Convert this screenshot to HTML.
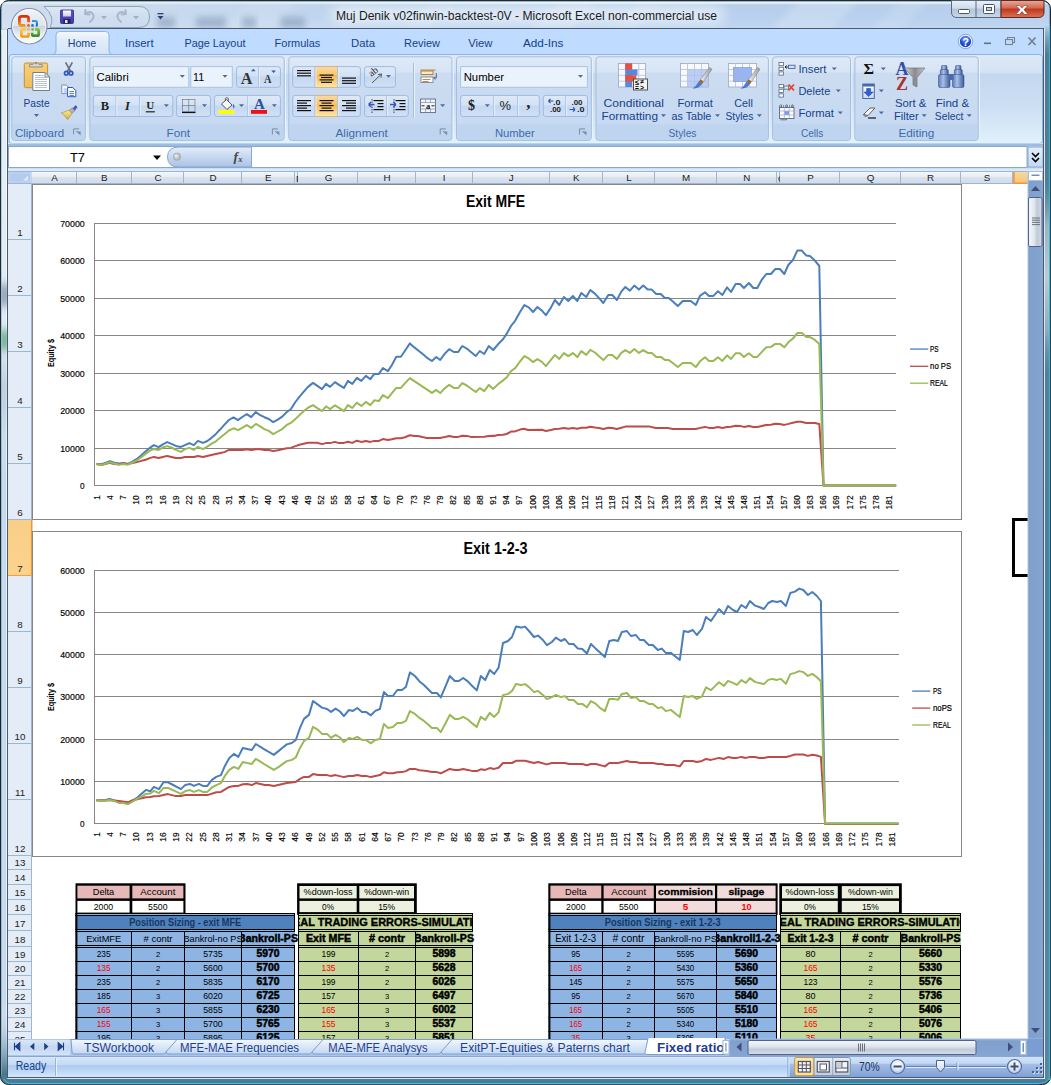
<!DOCTYPE html><html><head><meta charset="utf-8"><title>Muj Denik v02finwin-backtest-0V - Microsoft Excel non-commercial use</title><style>html,body{margin:0;padding:0;background:#fff}body{width:1051px;height:1085px;position:relative;overflow:hidden;font-family:'Liberation Sans',sans-serif}</style></head><body><svg width="1051" height="1085" viewBox="0 0 1051 1085" style="position:absolute;left:0;top:0;font-family:'Liberation Sans',sans-serif"><defs><linearGradient id="g1" x1="0" y1="0" x2="0" y2="1"><stop offset="0" stop-color="#a9c3dc"/><stop offset="0.14" stop-color="#7fa3b8"/><stop offset="0.3" stop-color="#5f8aa0"/><stop offset="0.6" stop-color="#4f7d94"/><stop offset="1" stop-color="#5f8ea6"/></linearGradient><linearGradient id="g2" x1="0" y1="0" x2="0" y2="1"><stop offset="0" stop-color="#eef4fb"/><stop offset="0.06" stop-color="#dfe9f5"/><stop offset="0.1" stop-color="#b7cfeb"/><stop offset="0.5" stop-color="#b9d1ee"/><stop offset="1" stop-color="#c6daf1"/></linearGradient><filter id="bl3" x="-20%" y="-100%" width="140%" height="300%"><feGaussianBlur stdDeviation="3"/></filter><filter id="bl6" x="-20%" y="-100%" width="140%" height="300%"><feGaussianBlur stdDeviation="6"/></filter><clipPath id="clipTB"><rect x="2" y="2" width="1047" height="26.5"/></clipPath><linearGradient id="g3" x1="0" y1="0" x2="1" y2="0"><stop offset="0" stop-color="#e3e9f0" stop-opacity="0.55"/><stop offset="0.6" stop-color="#dde6f0" stop-opacity="0.35"/><stop offset="1" stop-color="#dde6f0" stop-opacity="0"/></linearGradient><linearGradient id="g4" x1="0" y1="0" x2="1" y2="0"><stop offset="0" stop-color="#f2f7fc"/><stop offset="0.18" stop-color="#c9def3"/><stop offset="0.7" stop-color="#bdd7f0"/><stop offset="0.86" stop-color="#e6f0fa"/><stop offset="1" stop-color="#f0f5fb"/></linearGradient><linearGradient id="g5" x1="0" y1="0" x2="0" y2="1"><stop offset="0" stop-color="#ffffff" stop-opacity="0"/><stop offset="0.28" stop-color="#8fa6bd" stop-opacity="0.0"/><stop offset="0.34" stop-color="#9fb4c8" stop-opacity="0.55"/><stop offset="0.42" stop-color="#ffffff" stop-opacity="0"/><stop offset="0.93" stop-color="#ffffff" stop-opacity="0"/><stop offset="0.975" stop-color="#6f93aa" stop-opacity="0.6"/><stop offset="1" stop-color="#3f6f88" stop-opacity="1"/></linearGradient><linearGradient id="g6" x1="0" y1="0" x2="0" y2="1"><stop offset="0" stop-color="#ffffff" stop-opacity="0.55"/><stop offset="0.85" stop-color="#ffffff" stop-opacity="0.45"/><stop offset="1" stop-color="#ffffff" stop-opacity="0"/></linearGradient><clipPath id="clipLF"><rect x="1.5" y="30" width="5.5" height="1046"/></clipPath><filter id="blv" x="-200%" y="-50%" width="500%" height="200%"><feGaussianBlur stdDeviation="1.5 4"/></filter><linearGradient id="g7" x1="0" y1="0" x2="1" y2="0"><stop offset="0" stop-color="#5f8ca3"/><stop offset="0.5" stop-color="#5b889f"/><stop offset="1" stop-color="#6f9ab0"/></linearGradient><linearGradient id="g8" x1="0" y1="0" x2="0" y2="1"><stop offset="0" stop-color="#c6daf1" stop-opacity="1"/><stop offset="0.008" stop-color="#c6daf1" stop-opacity="0.5"/><stop offset="0.03" stop-color="#2f6078" stop-opacity="0.35"/><stop offset="0.15" stop-color="#2f6078" stop-opacity="0.3"/><stop offset="0.19" stop-color="#c9d6dd" stop-opacity="0.55"/><stop offset="0.24" stop-color="#cfdbe1" stop-opacity="0.8"/><stop offset="0.29" stop-color="#c9d6dd" stop-opacity="0.45"/><stop offset="0.33" stop-color="#2f6078" stop-opacity="0.25"/><stop offset="0.6" stop-color="#2a6585" stop-opacity="0.35"/><stop offset="1" stop-color="#3f6f88" stop-opacity="0.2"/></linearGradient><linearGradient id="g9" x1="0" y1="0" x2="0" y2="1"><stop offset="0" stop-color="#eef3fa" stop-opacity="0.55"/><stop offset="0.5" stop-color="#d6e2f1" stop-opacity="0.35"/><stop offset="1" stop-color="#c8d8ec" stop-opacity="0.5"/></linearGradient><linearGradient id="g10" x1="0" y1="0" x2="0" y2="1"><stop offset="0" stop-color="#5a52c9"/><stop offset="1" stop-color="#3f39a8"/></linearGradient><linearGradient id="g11" x1="0" y1="0" x2="0" y2="1"><stop offset="0" stop-color="#ffffff"/><stop offset="1" stop-color="#c9cdea"/></linearGradient><linearGradient id="g12" x1="0" y1="0" x2="0" y2="1"><stop offset="0" stop-color="#e9f0f8"/><stop offset="0.45" stop-color="#cfdcec"/><stop offset="0.5" stop-color="#b3c5da"/><stop offset="1" stop-color="#c9d8ea"/></linearGradient><linearGradient id="g13" x1="0" y1="0" x2="0" y2="1"><stop offset="0" stop-color="#e8a99b"/><stop offset="0.45" stop-color="#d3664f"/><stop offset="0.5" stop-color="#c0361c"/><stop offset="1" stop-color="#d9745a"/></linearGradient><linearGradient id="g14" x1="0" y1="0" x2="0" y2="1"><stop offset="0" stop-color="#f4f8fd"/><stop offset="0.3" stop-color="#e4eefa"/><stop offset="1" stop-color="#d3e4f8"/></linearGradient><radialGradient id="g15" cx="0.5" cy="0.3" r="0.7"><stop offset="0" stop-color="#7aa2ff"/><stop offset="0.6" stop-color="#1f4fd0"/><stop offset="1" stop-color="#123aa5"/></radialGradient><linearGradient id="g16" x1="0" y1="0" x2="0" y2="1"><stop offset="0" stop-color="#dde9f6"/><stop offset="0.2" stop-color="#d4e3f4"/><stop offset="0.22" stop-color="#c3d7ef"/><stop offset="0.6" stop-color="#cddff3"/><stop offset="0.9" stop-color="#dcecf9"/><stop offset="1" stop-color="#e3f3fd"/></linearGradient><linearGradient id="g17" x1="0" y1="0" x2="0" y2="1"><stop offset="0" stop-color="#dfeaf7"/><stop offset="0.18" stop-color="#d6e4f5"/><stop offset="0.2" stop-color="#ccdcf0"/><stop offset="0.8" stop-color="#c7daf2"/><stop offset="0.81" stop-color="#c1d6f0"/><stop offset="1" stop-color="#c3d8f2"/></linearGradient><linearGradient id="g18" x1="0" y1="0" x2="0" y2="1"><stop offset="0" stop-color="#dfe9f7"/><stop offset="0.45" stop-color="#d3e2f5"/><stop offset="0.5" stop-color="#c5d8f1"/><stop offset="1" stop-color="#d0e0f6"/></linearGradient><linearGradient id="g19" x1="0" y1="0" x2="0" y2="1"><stop offset="0" stop-color="#f7d07a"/><stop offset="1" stop-color="#efbd5c"/></linearGradient><linearGradient id="g20" x1="0" y1="0" x2="0" y2="1"><stop offset="0" stop-color="#f8f8fa"/><stop offset="1" stop-color="#c5c8d0"/></linearGradient><linearGradient id="g21" x1="0" y1="0" x2="0" y2="1"><stop offset="0" stop-color="#f9ec9a"/><stop offset="1" stop-color="#d4ad3a"/></linearGradient><linearGradient id="g22" x1="0" y1="0" x2="0" y2="1"><stop offset="0" stop-color="#fbd9a0"/><stop offset="0.4" stop-color="#fbc66f"/><stop offset="0.45" stop-color="#f9b957"/><stop offset="1" stop-color="#fde9a9"/></linearGradient><linearGradient id="g23" x1="0" y1="0" x2="0" y2="1"><stop offset="0" stop-color="#fbd9a0"/><stop offset="0.4" stop-color="#fbc66f"/><stop offset="0.45" stop-color="#f9b957"/><stop offset="1" stop-color="#fde9a9"/></linearGradient><linearGradient id="g24" x1="0" y1="0" x2="1" y2="0"><stop offset="0" stop-color="#f2f2f2"/><stop offset="1" stop-color="#9a9a9a"/></linearGradient><linearGradient id="g25" x1="0" y1="0" x2="1" y2="0"><stop offset="0" stop-color="#f2f2f2"/><stop offset="1" stop-color="#9a9a9a"/></linearGradient><linearGradient id="g26" x1="0" y1="0" x2="0" y2="1"><stop offset="0" stop-color="#ffffff"/><stop offset="1" stop-color="#c7d6f0"/></linearGradient><linearGradient id="g27" x1="0" y1="0" x2="1" y2="0"><stop offset="0" stop-color="#d8d8dc"/><stop offset="0.5" stop-color="#8a8a90"/><stop offset="1" stop-color="#c8c8cc"/></linearGradient><linearGradient id="g28" x1="0" y1="0" x2="1" y2="0"><stop offset="0" stop-color="#5a7ab8"/><stop offset="0.4" stop-color="#a8c0e8"/><stop offset="1" stop-color="#3a5a98"/></linearGradient><linearGradient id="g29" x1="0" y1="0" x2="0" y2="1"><stop offset="0" stop-color="#f2f5f9"/><stop offset="0.3" stop-color="#e4e9f1"/><stop offset="0.49" stop-color="#dfe5ee"/><stop offset="0.5" stop-color="#c9d3e2"/><stop offset="0.75" stop-color="#e9eef5"/><stop offset="1" stop-color="#ffffff"/></linearGradient><linearGradient id="g30" x1="0" y1="0" x2="0" y2="1"><stop offset="0" stop-color="#d8300f"/><stop offset="0.5" stop-color="#e8560f"/><stop offset="1" stop-color="#f59a0f"/></linearGradient><linearGradient id="g31" x1="0" y1="0" x2="0" y2="1"><stop offset="0" stop-color="#2f9be8"/><stop offset="1" stop-color="#1565d0"/></linearGradient><linearGradient id="g32" x1="0" y1="0" x2="0" y2="1"><stop offset="0" stop-color="#fdc94a"/><stop offset="1" stop-color="#f59a0f"/></linearGradient><linearGradient id="g33" x1="0" y1="0" x2="0" y2="1"><stop offset="0" stop-color="#7fc23a"/><stop offset="1" stop-color="#3f8f1f"/></linearGradient><linearGradient id="g34" x1="0" y1="0" x2="0" y2="1"><stop offset="0" stop-color="#e3edf9"/><stop offset="0.5" stop-color="#c6d8f0"/><stop offset="1" stop-color="#a9c2e6"/></linearGradient><radialGradient id="g35" cx="0.5" cy="0.5" r="0.5" fx="0.35" fy="0.35"><stop offset="0" stop-color="#f4f4f4"/><stop offset="1" stop-color="#9fa6ae"/></radialGradient><linearGradient id="g36" x1="0" y1="0" x2="0" y2="1"><stop offset="0" stop-color="#e4eefb"/><stop offset="1" stop-color="#c3d8f3"/></linearGradient><linearGradient id="g37" x1="0" y1="0" x2="0" y2="1"><stop offset="0" stop-color="#f6fafc"/><stop offset="0.45" stop-color="#e6edf6"/><stop offset="0.5" stop-color="#d9e2ef"/><stop offset="1" stop-color="#d2dbe9"/></linearGradient><linearGradient id="g38" x1="0" y1="0" x2="0" y2="1"><stop offset="0" stop-color="#f9d9a0"/><stop offset="1" stop-color="#f3c572"/></linearGradient><clipPath id="clipF"><rect x="295.5" y="170" width="2.5" height="14"/></clipPath><clipPath id="clipO"><rect x="777.5" y="170" width="2.5" height="14"/></clipPath><linearGradient id="g39" x1="0" y1="0" x2="0" y2="1"><stop offset="0" stop-color="#f9cf87"/><stop offset="1" stop-color="#fbd38e"/></linearGradient><clipPath id="clipR"><rect x="8" y="184" width="24" height="855"/></clipPath><linearGradient id="g40" x1="0" y1="0" x2="1" y2="0"><stop offset="0" stop-color="#aac3e6"/><stop offset="0.12" stop-color="#7f9fcd"/><stop offset="1" stop-color="#85a4cf"/></linearGradient><linearGradient id="g41" x1="0" y1="0" x2="1" y2="0"><stop offset="0" stop-color="#f3f5f8"/><stop offset="0.4" stop-color="#e3e8ee"/><stop offset="0.65" stop-color="#bfcad8"/><stop offset="1" stop-color="#d3dbe6"/></linearGradient><clipPath id="clipT"><rect x="32" y="870" width="996" height="169"/></clipPath><clipPath id="c42"><rect x="77.4" y="916" width="216.6" height="13"/></clipPath><clipPath id="c43"><rect x="76.4" y="932" width="54.6" height="13"/></clipPath><clipPath id="c44"><rect x="132" y="932" width="52" height="13"/></clipPath><clipPath id="c45"><rect x="185" y="932" width="56" height="13"/></clipPath><clipPath id="c46"><rect x="242" y="932" width="56.5" height="13"/></clipPath><clipPath id="c47"><rect x="299" y="916" width="173" height="13"/></clipPath><clipPath id="c48"><rect x="299" y="932" width="59" height="13"/></clipPath><clipPath id="c49"><rect x="359" y="932" width="56" height="13"/></clipPath><clipPath id="c50"><rect x="416" y="932" width="60.5" height="13"/></clipPath><clipPath id="c51"><rect x="550.4" y="916" width="225.6" height="13"/></clipPath><clipPath id="c52"><rect x="549.4" y="932" width="52.6" height="13"/></clipPath><clipPath id="c53"><rect x="603" y="932" width="51" height="13"/></clipPath><clipPath id="c54"><rect x="655" y="932" width="61" height="13"/></clipPath><clipPath id="c55"><rect x="717" y="932" width="63.5" height="13"/></clipPath><clipPath id="c56"><rect x="781" y="916" width="179" height="13"/></clipPath><clipPath id="c57"><rect x="781" y="932" width="59" height="13"/></clipPath><clipPath id="c58"><rect x="841" y="932" width="59" height="13"/></clipPath><clipPath id="c59"><rect x="901" y="932" width="63.5" height="13"/></clipPath><linearGradient id="g60" x1="0" y1="0" x2="0" y2="1"><stop offset="0" stop-color="#c9dcf5"/><stop offset="0.5" stop-color="#bcd3f0"/><stop offset="1" stop-color="#a9c5eb"/></linearGradient><linearGradient id="g61" x1="0" y1="0" x2="0" y2="1"><stop offset="0" stop-color="#dbe8f8"/><stop offset="0.5" stop-color="#c4d8f2"/><stop offset="1" stop-color="#d3e3f7"/></linearGradient><linearGradient id="g62" x1="0" y1="0" x2="0" y2="1"><stop offset="0" stop-color="#f3f8fd"/><stop offset="0.45" stop-color="#dbe8f8"/><stop offset="1" stop-color="#c3d8f3"/></linearGradient><clipPath id="clipAT"><rect x="645" y="1038" width="78" height="18"/></clipPath><linearGradient id="g63" x1="0" y1="0" x2="0" y2="1"><stop offset="0" stop-color="#a3bde3"/><stop offset="0.15" stop-color="#7f9fcd"/><stop offset="1" stop-color="#86a5d1"/></linearGradient><linearGradient id="g64" x1="0" y1="0" x2="0" y2="1"><stop offset="0" stop-color="#f5f7fa"/><stop offset="0.4" stop-color="#e2e7ee"/><stop offset="0.65" stop-color="#c0cbd9"/><stop offset="1" stop-color="#d5dde7"/></linearGradient><linearGradient id="g65" x1="0" y1="0" x2="0" y2="1"><stop offset="0" stop-color="#d9e7f9"/><stop offset="0.12" stop-color="#d3e3f8"/><stop offset="0.42" stop-color="#c3d9f6"/><stop offset="0.45" stop-color="#adc9f0"/><stop offset="0.8" stop-color="#c5dcf8"/><stop offset="1" stop-color="#d9e8fb"/></linearGradient><linearGradient id="g66" x1="0" y1="0" x2="0" y2="1"><stop offset="0" stop-color="#d3e3f8"/><stop offset="0.33" stop-color="#c5d9f4"/><stop offset="0.4" stop-color="#a3bee6"/><stop offset="1" stop-color="#7f9fd3"/></linearGradient><linearGradient id="g67" x1="0" y1="0" x2="0" y2="1"><stop offset="0" stop-color="#e8eef6"/><stop offset="0.5" stop-color="#d3dce8"/><stop offset="1" stop-color="#c3cedd"/></linearGradient><linearGradient id="g68" x1="0" y1="0" x2="0" y2="1"><stop offset="0" stop-color="#fde9b8"/><stop offset="0.5" stop-color="#fbcf73"/><stop offset="1" stop-color="#fde3a3"/></linearGradient><radialGradient id="g69" cx="0.5" cy="0.35" r="0.5"><stop offset="0" stop-color="#ffffff"/><stop offset="0.7" stop-color="#e3ecf8"/><stop offset="1" stop-color="#c3d5ee"/></radialGradient><radialGradient id="g70" cx="0.5" cy="0.35" r="0.5"><stop offset="0" stop-color="#ffffff"/><stop offset="0.7" stop-color="#e3ecf8"/><stop offset="1" stop-color="#c3d5ee"/></radialGradient><linearGradient id="g71" x1="0" y1="0" x2="0" y2="1"><stop offset="0" stop-color="#f9fbfe"/><stop offset="1" stop-color="#c9d9f0"/></linearGradient></defs><rect x="0.5" y="0.5" width="1050" height="1084" fill="#46778f" stroke="#1c2a33" stroke-width="1" rx="8" />
<path d="M1.5 34 V9 Q1.5 1.5 9 1.5 H1042 Q1049.5 1.5 1049.5 9 V34 Z" fill="url(#g2)" />
<g clip-path="url(#clipTB)">
<path d="M560 0 h40 l-30 30 h-40 z" fill="#ffffff" opacity="0.16" filter="url(#bl3)"/>
<path d="M640 0 h25 l-30 30 h-25 z" fill="#ffffff" opacity="0.12" filter="url(#bl3)"/>
<path d="M800 0 h60 l-30 30 h-60 z" fill="#ffffff" opacity="0.18" filter="url(#bl3)"/>
<path d="M900 0 h30 l-30 30 h-30 z" fill="#ffffff" opacity="0.12" filter="url(#bl3)"/>
<path d="M250 0 h50 l-30 30 h-50 z" fill="#ffffff" opacity="0.12" filter="url(#bl3)"/>
<path d="M430 0 h30 l-30 30 h-30 z" fill="#ffffff" opacity="0.1" filter="url(#bl3)"/>
<rect x="2" y="2" width="420" height="27" fill="url(#g3)" />
<rect x="157" y="17" width="18" height="11" fill="#6f86a8" opacity="0.45" filter="url(#bl3)"/>
<rect x="196" y="17" width="30" height="11" fill="#6f86a8" opacity="0.45" filter="url(#bl3)"/>
<rect x="242" y="17" width="14" height="11" fill="#6f86a8" opacity="0.45" filter="url(#bl3)"/>
<rect x="281" y="17" width="24" height="11" fill="#6f86a8" opacity="0.45" filter="url(#bl3)"/>
<rect x="330" y="6" width="395" height="18" fill="#ffffff" rx="9" opacity="0.55" filter="url(#bl6)"/>
</g>
<rect x="1.5" y="30" width="5.5" height="1046" fill="url(#g4)" />
<rect x="1.5" y="30" width="5.5" height="1046" fill="url(#g5)" />
<rect x="1.5" y="30" width="5.5" height="380" fill="url(#g6)" />
<g clip-path="url(#clipLF)">
<rect x="0" y="284" width="9" height="22" fill="#6f7f9a" opacity="0.6" filter="url(#blv)"/>
<rect x="0" y="330" width="9" height="20" fill="#3f9a6a" opacity="0.6" filter="url(#blv)"/>
</g>
<rect x="7" y="29" width="1" height="1049" fill="#4b5a6a" />
<rect x="1043" y="29" width="1" height="1049" fill="#4b5a6a" />
<rect x="1044" y="29" width="1" height="1049.5" fill="#dfe7ee" />
<rect x="1045" y="24" width="4.4" height="1056" fill="url(#g7)" />
<rect x="1045" y="24" width="4.4" height="1056" fill="url(#g8)" />
<rect x="1049.3" y="26" width="0.9" height="1054" fill="#2fc4ee" />
<path d="M7 1077 H1045 V1078 Q1045 1084.5 1038 1084.5 H12 Q2 1084.5 1.5 1075 H7 Z" fill="#4c7b93" />
<rect x="7" y="1077" width="1037" height="1" fill="#4b5a6a" />
<rect x="7.5" y="1078" width="1037" height="0.9" fill="#dfe7ee" />
<path d="M4 1079 Q6 1083.5 12 1083.5 H1038 Q1046 1083.5 1049.5 1078" fill="none" stroke="#2fc4ee" stroke-width="1" />
<rect x="8" y="29" width="1035.5" height="1048.5" fill="#bfdbff" />
<rect x="8" y="28" width="1035" height="1" fill="#4b5a6a" />
<path d="M44 6.5 H139 Q149.5 6.5 149.5 17 Q149.5 27.5 139 27.5 H50 Q56 17 44 6.5 Z" fill="url(#g9)" stroke="#8fa3ba" stroke-width="1" />
<rect x="60.5" y="10" width="13" height="13.5" fill="url(#g10)" stroke="#2f2a80" stroke-width="0.8" rx="1" />
<rect x="63" y="10.5" width="8" height="6" fill="url(#g11)" />
<rect x="63.5" y="19" width="7" height="4.5" fill="#23205c" />
<rect x="65" y="20" width="2.5" height="3" fill="#e8e8f4" />
<path d="M85 14 q5 -4 8 0 q2 4 -3 8 M85 14 l0.5 -4 M85 14 l4.5 0.5" fill="none" stroke="#a9b6cc" stroke-width="2" stroke-linecap="round"/>
<path d="M101 16 h6 l-3 3.5 z" fill="#a9b0bd" />
<path d="M126 14 q-5 -4 -8 0 q-2 4 3 8 M126 14 l-0.5 -4 M126 14 l-4.5 0.5" fill="none" stroke="#a9b6cc" stroke-width="2" stroke-linecap="round"/>
<path d="M133 16 h6 l-3 3.5 z" fill="#a9b0bd" />
<rect x="157.5" y="13" width="6" height="1.3" fill="#2b3f7a" />
<path d="M157.5 16 h6 l-3 3.5 z" fill="#2b3f7a" />
<text x="336" y="19.5" font-size="12" fill="#1b1b1b" textLength="381" lengthAdjust="spacingAndGlyphs" >Muj Denik v02finwin-backtest-0V - Microsoft Excel non-commercial use</text>
<path d="M951.5 0.5 V12 Q951.5 17.5 957 17.5 H1001 V0.5 Z" fill="url(#g12)" stroke="#5a6a7c" stroke-width="1" />
<line x1="976" y1="1" x2="976" y2="17.5" stroke="#5a6a7c" stroke-width="1" />
<path d="M1001 0.5 H1044 V12 Q1044 17.5 1038.5 17.5 H1001 Z" fill="url(#g13)" stroke="#5a2a25" stroke-width="1" />
<rect x="958.5" y="9.5" width="11" height="4" fill="#fff" stroke="#4c5563" stroke-width="1" rx="1" />
<rect x="983.5" y="4.5" width="11" height="9" fill="#fff" stroke="#4c5563" stroke-width="1" rx="1" />
<rect x="986.5" y="7.5" width="5" height="3" fill="#c5d3e4" stroke="#4c5563" stroke-width="1" />
<text x="1016.5" y="13.6" font-size="15" fill="#fff" font-weight="bold" textLength="11" lengthAdjust="spacingAndGlyphs" stroke="#5a3030" stroke-width="0.7" paint-order="stroke">x</text>
<rect x="8" y="29" width="1035.5" height="25.5" fill="#bfdbff" />
<path d="M52 54.5 Q56 54.5 56 50 V35 Q56 31.5 59.5 31.5 H105.5 Q109 31.5 109 35 V50 Q109 54.5 113 54.5 Z" fill="url(#g14)" stroke="#8db2e3" stroke-width="1" />
<text x="67.7" y="47.3" font-size="11.2" fill="#15428b" textLength="28.5" lengthAdjust="spacingAndGlyphs" >Home</text>
<text x="125" y="47.3" font-size="11.2" fill="#15428b" textLength="28.6" lengthAdjust="spacingAndGlyphs" >Insert</text>
<text x="184.4" y="47.3" font-size="11.2" fill="#15428b" textLength="61.1" lengthAdjust="spacingAndGlyphs" >Page Layout</text>
<text x="274.6" y="47.3" font-size="11.2" fill="#15428b" textLength="45.7" lengthAdjust="spacingAndGlyphs" >Formulas</text>
<text x="351" y="47.3" font-size="11.2" fill="#15428b" textLength="24" lengthAdjust="spacingAndGlyphs" >Data</text>
<text x="404" y="47.3" font-size="11.2" fill="#15428b" textLength="36" lengthAdjust="spacingAndGlyphs" >Review</text>
<text x="468.3" y="47.3" font-size="11.2" fill="#15428b" textLength="24.2" lengthAdjust="spacingAndGlyphs" >View</text>
<text x="523" y="47.3" font-size="11.2" fill="#15428b" textLength="40.5" lengthAdjust="spacingAndGlyphs" >Add-Ins</text>
<circle cx="965.5" cy="41.5" r="6.3" fill="url(#g15)" stroke="#e9f1ff" stroke-width="1.3" />
<circle cx="965.5" cy="41.5" r="7.2" fill="none" stroke="#5b7fc0" stroke-width="0.6" />
<text x="965.5" y="45.6" font-size="11" fill="#fff" text-anchor="middle" font-weight="bold" >?</text>
<rect x="984" y="42.5" width="7" height="1.6" fill="#6a7280" />
<rect x="1005.5" y="39.5" width="7" height="5" fill="none" stroke="#7a8290" stroke-width="1.1" />
<path d="M1007.5 39.5 v-2 h7 v5 h-2" fill="none" stroke="#7a8290" stroke-width="1.1" />
<path d="M1028.5 37.5 l7 7.5 M1035.5 37.5 l-7 7.5" fill="none" stroke="#7a8290" stroke-width="1.8" />
<rect x="9" y="54.5" width="1033.5" height="89" fill="url(#g16)" stroke="#8db2e3" stroke-width="1" rx="3" />
<rect x="8" y="143.5" width="1035.5" height="1.2" fill="#dff1fb" />
<rect x="11.8" y="56.8" width="73.6" height="83.6" fill="url(#g17)" stroke="#a3bfe0" stroke-width="1" rx="3" />
<rect x="12.6" y="124.8" width="72" height="15" fill="#bfd5ef" rx="2" />
<rect x="86.2" y="58" width="1" height="81" fill="#e9f2fc" />
<text x="14.9" y="136.5" font-size="11" fill="#3e6aaa" textLength="49.3" lengthAdjust="spacingAndGlyphs" >Clipboard</text>
<path d="M73.6 128.9 h5.5 M73.6 128.9 v5.5" fill="none" stroke="#7b8ba5" stroke-width="1" />
<path d="M80.6 135.4 v-4 h-4 z" fill="#7b8ba5" />
<path d="M76.4 131 l2.5 2.5" fill="none" stroke="#7b8ba5" stroke-width="1" />
<rect x="89.9" y="56.8" width="194.3" height="83.6" fill="url(#g17)" stroke="#a3bfe0" stroke-width="1" rx="3" />
<rect x="90.7" y="124.8" width="192.7" height="15" fill="#bfd5ef" rx="2" />
<rect x="285" y="58" width="1" height="81" fill="#e9f2fc" />
<text x="166.5" y="136.5" font-size="11" fill="#3e6aaa" textLength="23.5" lengthAdjust="spacingAndGlyphs" >Font</text>
<path d="M272.4 128.9 h5.5 M272.4 128.9 v5.5" fill="none" stroke="#7b8ba5" stroke-width="1" />
<path d="M279.4 135.4 v-4 h-4 z" fill="#7b8ba5" />
<path d="M275.2 131 l2.5 2.5" fill="none" stroke="#7b8ba5" stroke-width="1" />
<rect x="288.8" y="56.8" width="163.2" height="83.6" fill="url(#g17)" stroke="#a3bfe0" stroke-width="1" rx="3" />
<rect x="289.6" y="124.8" width="161.6" height="15" fill="#bfd5ef" rx="2" />
<rect x="452.8" y="58" width="1" height="81" fill="#e9f2fc" />
<text x="335.5" y="136.5" font-size="11" fill="#3e6aaa" textLength="52.3" lengthAdjust="spacingAndGlyphs" >Alignment</text>
<path d="M440.2 128.9 h5.5 M440.2 128.9 v5.5" fill="none" stroke="#7b8ba5" stroke-width="1" />
<path d="M447.2 135.4 v-4 h-4 z" fill="#7b8ba5" />
<path d="M443 131 l2.5 2.5" fill="none" stroke="#7b8ba5" stroke-width="1" />
<rect x="456.5" y="56.8" width="134.8" height="83.6" fill="url(#g17)" stroke="#a3bfe0" stroke-width="1" rx="3" />
<rect x="457.3" y="124.8" width="133.2" height="15" fill="#bfd5ef" rx="2" />
<rect x="592.1" y="58" width="1" height="81" fill="#e9f2fc" />
<text x="494.9" y="136.5" font-size="11" fill="#3e6aaa" textLength="39.9" lengthAdjust="spacingAndGlyphs" >Number</text>
<path d="M579.5 128.9 h5.5 M579.5 128.9 v5.5" fill="none" stroke="#7b8ba5" stroke-width="1" />
<path d="M586.5 135.4 v-4 h-4 z" fill="#7b8ba5" />
<path d="M582.3 131 l2.5 2.5" fill="none" stroke="#7b8ba5" stroke-width="1" />
<rect x="596" y="56.8" width="172.4" height="83.6" fill="url(#g17)" stroke="#a3bfe0" stroke-width="1" rx="3" />
<rect x="596.8" y="124.8" width="170.8" height="15" fill="#bfd5ef" rx="2" />
<rect x="769.2" y="58" width="1" height="81" fill="#e9f2fc" />
<text x="668.5" y="136.5" font-size="11" fill="#3e6aaa" textLength="28" lengthAdjust="spacingAndGlyphs" >Styles</text>
<rect x="772.6" y="56.8" width="77.9" height="83.6" fill="url(#g17)" stroke="#a3bfe0" stroke-width="1" rx="3" />
<rect x="773.4" y="124.8" width="76.3" height="15" fill="#bfd5ef" rx="2" />
<rect x="851.3" y="58" width="1" height="81" fill="#e9f2fc" />
<text x="801" y="136.5" font-size="11" fill="#3e6aaa" textLength="22.3" lengthAdjust="spacingAndGlyphs" >Cells</text>
<rect x="854.9" y="56.8" width="123.3" height="83.6" fill="url(#g17)" stroke="#a3bfe0" stroke-width="1" rx="3" />
<rect x="855.7" y="124.8" width="121.7" height="15" fill="#bfd5ef" rx="2" />
<rect x="979" y="58" width="1" height="81" fill="#e9f2fc" />
<text x="898.5" y="136.5" font-size="11" fill="#3e6aaa" textLength="35.9" lengthAdjust="spacingAndGlyphs" >Editing</text>
<rect x="24.3" y="63" width="23.3" height="24.7" fill="url(#g19)" stroke="#c39238" stroke-width="1" rx="1.5" />
<path d="M29.6 67 v-2.6 h3.6 q2.7 -4.2 5.4 0 h3.6 v2.6 z" fill="url(#g20)" stroke="#7e828c" stroke-width="0.8" />
<circle cx="35.9" cy="63.6" r="1" fill="#b9843a" />
<path d="M32.8 72.5 h12.2 l4.5 4.5 v13.5 h-16.7 z" fill="#fcfdfe" stroke="#6f7f98" stroke-width="1" />
<path d="M45 72.5 v4.5 h4.5 z" fill="#dfe5ee" stroke="#6f7f98" stroke-width="0.8" />
<rect x="35" y="75" width="9" height="0.9" fill="#b3bccb" />
<rect x="35" y="77" width="12" height="0.9" fill="#b3bccb" />
<rect x="35" y="79" width="12" height="0.9" fill="#b3bccb" />
<rect x="35" y="81" width="12" height="0.9" fill="#b3bccb" />
<rect x="35" y="83" width="12" height="0.9" fill="#b3bccb" />
<rect x="35" y="85" width="12" height="0.9" fill="#b3bccb" />
<rect x="35" y="87" width="12" height="0.9" fill="#b3bccb" />
<text x="23.6" y="106.6" font-size="11" fill="#15428b" textLength="26" lengthAdjust="spacingAndGlyphs" >Paste</text>
<path d="M34 114.1 h5 l-2.5 2.8 z" fill="#4a6a9f" />
<path d="M65.6 62.3 l5 9.2 M72.3 62.3 l-5 9.2" fill="none" stroke="#6a6f78" stroke-width="1.6" />
<circle cx="66.3" cy="73.2" r="1.8" fill="none" stroke="#2f55c0" stroke-width="1.7" />
<circle cx="71" cy="73.2" r="1.8" fill="none" stroke="#2f55c0" stroke-width="1.7" />
<path d="M61.8 85 h4.3 l3 3 v5.6 h-7.3 z" fill="#fdfdfe" stroke="#7f8fb0" stroke-width="1" />
<rect x="63.6" y="88.6" width="3.7" height="1" fill="#8fa8e0" />
<rect x="63.6" y="90.6" width="3.7" height="1" fill="#8fa8e0" />
<rect x="63.6" y="92.6" width="3.7" height="1" fill="#8fa8e0" />
<path d="M67.6 87.5 h5.2 l3 3 v6.2 h-8.2 z" fill="#fdfdfe" stroke="#2f55c0" stroke-width="1" />
<rect x="69.4" y="91.1" width="4.6" height="1" fill="#4f78d8" />
<rect x="69.4" y="93.1" width="4.6" height="1" fill="#4f78d8" />
<rect x="69.4" y="95.1" width="4.6" height="1" fill="#4f78d8" />
<path d="M72.6 108.8 l3 -3.2 l1.6 1.4 l-2.6 3.6 z" fill="#5a4fc0" stroke="#3a3290" stroke-width="0.5" />
<path d="M68.8 110.5 l3.6 -2.6 l2.6 2.8 l-3.4 2.8 z" fill="#aeb2c0" stroke="#6a6e7c" stroke-width="0.5" />
<path d="M61.3 113 l7.6 -2.8 l3 3.4 l-4.2 6 q-3 -4.5 -6.4 -6.6 z" fill="url(#g21)" stroke="#a88a2a" stroke-width="0.6" />
<rect x="93.3" y="66.6" width="95.5" height="20.7" fill="#eaf2fb" stroke="#a9c4e6" stroke-width="1" />
<text x="96.5" y="80.8" font-size="11" fill="#000" textLength="32.2" lengthAdjust="spacingAndGlyphs" >Calibri</text>
<path d="M179.8 75 h5 l-2.5 2.8 z" fill="#4a6a9f" />
<rect x="190.8" y="66.6" width="41.5" height="20.7" fill="#eaf2fb" stroke="#a9c4e6" stroke-width="1" />
<text x="193" y="80.8" font-size="11" fill="#000" textLength="11.2" lengthAdjust="spacingAndGlyphs" >11</text>
<path d="M222.5 75 h5 l-2.5 2.8 z" fill="#4a6a9f" />
<rect x="236.6" y="66.6" width="43.8" height="20.7" fill="url(#g18)" stroke="#9dbbe3" stroke-width="1" rx="2.5" />
<rect x="258" y="67.1" width="1" height="19.7" fill="#aac5e8" />
<rect x="259" y="67.1" width="1" height="19.7" fill="#e3eefb" />
<text x="240.8" y="83.6" font-size="16" fill="#333" font-weight="bold" font-family="'Liberation Serif',serif" textLength="11.7" lengthAdjust="spacingAndGlyphs" >A</text>
<path d="M251 71.3 h4.6 l-2.3 -2.6 z" fill="#2f55b5" />
<text x="264" y="83.4" font-size="11.5" fill="#333" font-weight="bold" font-family="'Liberation Serif',serif" textLength="7.5" lengthAdjust="spacingAndGlyphs" >A</text>
<path d="M271.3 70.5 h4.6 l-2.3 2.6 z" fill="#2f55b5" />
<rect x="93.3" y="95.4" width="79.5" height="21.1" fill="url(#g18)" stroke="#9dbbe3" stroke-width="1" rx="2.5" />
<rect x="115.4" y="95.9" width="1" height="20.1" fill="#aac5e8" />
<rect x="116.4" y="95.9" width="1" height="20.1" fill="#e3eefb" />
<rect x="139" y="95.9" width="1" height="20.1" fill="#aac5e8" />
<rect x="140" y="95.9" width="1" height="20.1" fill="#e3eefb" />
<text x="104.8" y="109.8" font-size="12.5" fill="#222" text-anchor="middle" font-weight="bold" font-family="'Liberation Serif',serif" >B</text>
<text x="127.4" y="109.8" font-size="12.5" fill="#222" text-anchor="middle" font-weight="bold" font-family="'Liberation Serif',serif" font-style="italic" >I</text>
<text x="150.2" y="109.3" font-size="11" fill="#222" text-anchor="middle" font-weight="bold" font-family="'Liberation Serif',serif" >U</text>
<rect x="145.8" y="111.2" width="9" height="1.2" fill="#222" />
<path d="M163.9 104.2 h5 l-2.5 2.8 z" fill="#4a6a9f" />
<rect x="176.6" y="95.4" width="33.9" height="21.1" fill="url(#g18)" stroke="#9dbbe3" stroke-width="1" rx="2.5" />
<path d="M182.5 99.5 h12.5 M182.5 105.5 h12.5 M182.5 99.5 v12 M188.7 99.5 v12 M195 99.5 v12" fill="none" stroke="#555" stroke-width="1" stroke-dasharray="1 1"/>
<rect x="182" y="111.6" width="13.5" height="1.5" fill="#111" />
<path d="M202 104.2 h5 l-2.5 2.8 z" fill="#4a6a9f" />
<rect x="214.5" y="95.4" width="65.9" height="21.1" fill="url(#g18)" stroke="#9dbbe3" stroke-width="1" rx="2.5" />
<rect x="247.2" y="95.9" width="1" height="20.1" fill="#aac5e8" />
<rect x="248.2" y="95.9" width="1" height="20.1" fill="#e3eefb" />
<path d="M221.5 104 l5 -4.5 l5.5 5.5 l-5 4.5 z" fill="#f4f6fa" stroke="#555" stroke-width="1" />
<path d="M233.3 103.5 q2.2 3 0.3 5.2 q-1.8 -2.2 -0.3 -5.2" fill="#3f6fd0" />
<path d="M225.3 100.5 v-2 q1.5 -2 3 0 v3" fill="none" stroke="#555" stroke-width="0.9" />
<rect x="218.2" y="110" width="15.8" height="3.8" fill="#ffff00" />
<path d="M239 104.2 h5 l-2.5 2.8 z" fill="#4a6a9f" />
<text x="259.3" y="108.8" font-size="15" fill="#2f4f9f" text-anchor="middle" font-weight="bold" font-family="'Liberation Serif',serif" >A</text>
<rect x="251" y="110" width="16" height="3.8" fill="#ee1111" />
<path d="M271.9 104.2 h5 l-2.5 2.8 z" fill="#4a6a9f" />
<rect x="292.7" y="66.6" width="67.7" height="20.7" fill="url(#g18)" stroke="#9dbbe3" stroke-width="1" rx="2.5" />
<rect x="315" y="66.6" width="22.7" height="20.7" fill="url(#g22)" stroke="#d9a860" stroke-width="0.6" />
<rect x="314.5" y="67.1" width="1" height="19.7" fill="#aac5e8" />
<rect x="315.5" y="67.1" width="1" height="19.7" fill="#e3eefb" />
<rect x="337.2" y="67.1" width="1" height="19.7" fill="#aac5e8" />
<rect x="338.2" y="67.1" width="1" height="19.7" fill="#e3eefb" />
<rect x="297" y="70" width="14" height="1.2" fill="#111" />
<rect x="297" y="72.6" width="14" height="1.2" fill="#111" />
<rect x="297" y="75.2" width="14" height="1.2" fill="#111" />
<rect x="319.5" y="74.5" width="14" height="1.2" fill="#111" />
<rect x="321" y="76.9" width="11" height="1.2" fill="#111" />
<rect x="319.5" y="79.3" width="14" height="1.2" fill="#111" />
<rect x="321" y="81.7" width="11" height="1.2" fill="#111" />
<rect x="342" y="77.5" width="14" height="1.2" fill="#111" />
<rect x="342" y="80.1" width="14" height="1.2" fill="#111" />
<rect x="342" y="82.7" width="14" height="1.2" fill="#111" />
<rect x="364.6" y="66.6" width="30.9" height="20.7" fill="url(#g18)" stroke="#9dbbe3" stroke-width="1" rx="2.5" />
<text x="0" y="0" font-size="10" fill="#222" font-family="'Liberation Serif',serif" transform="translate(371.5,77) rotate(-40)">ab</text>
<path d="M372 83 l9.5 -9 M381.5 74 l-3.6 0.6 M381.5 74 l-0.6 3.6" fill="none" stroke="#555" stroke-width="1" />
<path d="M386 75 h5 l-2.5 2.8 z" fill="#4a6a9f" />
<rect x="292.7" y="95.4" width="67.7" height="21.1" fill="url(#g18)" stroke="#9dbbe3" stroke-width="1" rx="2.5" />
<rect x="315" y="95.4" width="22.7" height="21.1" fill="url(#g23)" stroke="#d9a860" stroke-width="0.6" />
<rect x="314.5" y="95.9" width="1" height="20.1" fill="#aac5e8" />
<rect x="315.5" y="95.9" width="1" height="20.1" fill="#e3eefb" />
<rect x="337.2" y="95.9" width="1" height="20.1" fill="#aac5e8" />
<rect x="338.2" y="95.9" width="1" height="20.1" fill="#e3eefb" />
<rect x="297" y="100" width="14" height="1.2" fill="#111" />
<rect x="297" y="102.5" width="10" height="1.2" fill="#111" />
<rect x="297" y="105" width="14" height="1.2" fill="#111" />
<rect x="297" y="107.5" width="10" height="1.2" fill="#111" />
<rect x="297" y="110" width="14" height="1.2" fill="#111" />
<rect x="319.5" y="100" width="14" height="1.2" fill="#111" />
<rect x="321.5" y="102.5" width="10" height="1.2" fill="#111" />
<rect x="319.5" y="105" width="14" height="1.2" fill="#111" />
<rect x="321.5" y="107.5" width="10" height="1.2" fill="#111" />
<rect x="319.5" y="110" width="14" height="1.2" fill="#111" />
<rect x="342" y="100" width="14" height="1.2" fill="#111" />
<rect x="346" y="102.5" width="10" height="1.2" fill="#111" />
<rect x="342" y="105" width="14" height="1.2" fill="#111" />
<rect x="346" y="107.5" width="10" height="1.2" fill="#111" />
<rect x="342" y="110" width="14" height="1.2" fill="#111" />
<rect x="364.6" y="95.4" width="43.7" height="21.1" fill="url(#g18)" stroke="#9dbbe3" stroke-width="1" rx="2.5" />
<rect x="386.1" y="95.9" width="1" height="20.1" fill="#aac5e8" />
<rect x="387.1" y="95.9" width="1" height="20.1" fill="#e3eefb" />
<rect x="373.5" y="100" width="10" height="1.2" fill="#111" />
<rect x="377.5" y="103" width="6" height="1.2" fill="#111" />
<rect x="377.5" y="106" width="6" height="1.2" fill="#111" />
<rect x="373.5" y="109" width="10" height="1.2" fill="#111" />
<path d="M372 99 v14" fill="none" stroke="#222" stroke-width="0.8" stroke-dasharray="1.5 1"/>
<path d="M374.5 104.5 h-6 m0 0 l2.5 -2.5 m-2.5 2.5 l2.5 2.5" fill="none" stroke="#2f55c5" stroke-width="1.3" />
<rect x="395.5" y="100" width="10" height="1.2" fill="#111" />
<rect x="399.5" y="103" width="6" height="1.2" fill="#111" />
<rect x="399.5" y="106" width="6" height="1.2" fill="#111" />
<rect x="395.5" y="109" width="10" height="1.2" fill="#111" />
<path d="M394 99 v14" fill="none" stroke="#222" stroke-width="0.8" stroke-dasharray="1.5 1"/>
<path d="M390 104.5 h6 m0 0 l-2.5 -2.5 m2.5 2.5 l-2.5 2.5" fill="none" stroke="#2f55c5" stroke-width="1.3" />
<rect x="413" y="62.8" width="1" height="55" fill="#a3bfe0" />
<rect x="414" y="62.8" width="1" height="55" fill="#e9f2fc" />
<rect x="421" y="71" width="12" height="3.5" fill="#fbe9c5" stroke="#9a6a2a" stroke-width="0.8" />
<rect x="420.5" y="69.5" width="15" height="1.2" fill="#c98a3a" />
<rect x="421" y="77" width="12" height="5.5" fill="#fdfdfe" stroke="#6a7890" stroke-width="0.8" />
<rect x="422.5" y="79" width="8" height="1" fill="#c98a3a" />
<rect x="422.5" y="81" width="6" height="1" fill="#c98a3a" />
<path d="M436.3 73 v5 h-2.5 m0 0 l1.5 -1.5 m-1.5 1.5 l1.5 1.5" fill="none" stroke="#4a5a78" stroke-width="0.9" />
<rect x="420.5" y="99" width="15" height="13.5" fill="#f2f5fa" stroke="#6a7890" stroke-width="1" />
<path d="M420.5 102.5 h15 M420.5 109 h15 M425.5 99 v3.5 M430.5 99 v3.5 M425.5 109 v3.5 M430.5 109 v3.5" fill="none" stroke="#8a98b0" stroke-width="0.8" />
<text x="428" y="108.5" font-size="8.5" fill="#111" text-anchor="middle" font-weight="bold" font-family="'Liberation Serif',serif" >a</text>
<path d="M421.5 105.8 h3 M434.5 105.8 h-3" fill="none" stroke="#222" stroke-width="1" />
<path d="M440.1 104.2 h5 l-2.5 2.8 z" fill="#4a6a9f" />
<rect x="460.6" y="66.6" width="126.8" height="20.7" fill="#eaf2fb" stroke="#a9c4e6" stroke-width="1" />
<text x="463.7" y="80.8" font-size="11" fill="#000" textLength="40.3" lengthAdjust="spacingAndGlyphs" >Number</text>
<path d="M578 75 h5 l-2.5 2.8 z" fill="#4a6a9f" />
<rect x="460.6" y="95.4" width="78.8" height="21.1" fill="url(#g18)" stroke="#9dbbe3" stroke-width="1" rx="2.5" />
<rect x="493.2" y="95.9" width="1" height="20.1" fill="#aac5e8" />
<rect x="494.2" y="95.9" width="1" height="20.1" fill="#e3eefb" />
<rect x="517.1" y="95.9" width="1" height="20.1" fill="#aac5e8" />
<rect x="518.1" y="95.9" width="1" height="20.1" fill="#e3eefb" />
<text x="471.4" y="110.3" font-size="14" fill="#222" text-anchor="middle" font-weight="bold" font-family="'Liberation Serif',serif" >$</text>
<path d="M484.8 104.2 h5 l-2.5 2.8 z" fill="#4a6a9f" />
<text x="505.3" y="110.3" font-size="13" fill="#222" text-anchor="middle" textLength="11.5" lengthAdjust="spacingAndGlyphs" >%</text>
<text x="528.4" y="107.5" font-size="17" fill="#222" text-anchor="middle" font-weight="bold" font-family="'Liberation Serif',serif" >,</text>
<rect x="543.3" y="95.4" width="44.2" height="21.1" fill="url(#g18)" stroke="#9dbbe3" stroke-width="1" rx="2.5" />
<rect x="565.1" y="95.9" width="1" height="20.1" fill="#aac5e8" />
<rect x="566.1" y="95.9" width="1" height="20.1" fill="#e3eefb" />
<text x="549" y="104.8" font-size="7.5" fill="#222" font-weight="bold" textLength="7.5" lengthAdjust="spacingAndGlyphs" dx="4">.0</text>
<text x="550" y="111.6" font-size="7.5" fill="#222" font-weight="bold" textLength="11" lengthAdjust="spacingAndGlyphs" >.00</text>
<path d="M553.5 101 h-5 m0 0 l2 -2 m-2 2 l2 2" fill="none" stroke="#2f55c5" stroke-width="1.2" />
<text x="571.5" y="104.8" font-size="7.5" fill="#222" font-weight="bold" textLength="11" lengthAdjust="spacingAndGlyphs" >.00</text>
<text x="577" y="111.6" font-size="7.5" fill="#222" font-weight="bold" textLength="7.5" lengthAdjust="spacingAndGlyphs" >.0</text>
<path d="M569.5 109.5 h5.5 m0 0 l-2 -2 m2 2 l-2 2" fill="none" stroke="#2f55c5" stroke-width="1.2" />
<rect x="618.6" y="63.5" width="27" height="23.5" fill="#f8f9fc" stroke="#9aa8c0" stroke-width="0.8" />
<rect x="624.95" y="63.5" width="0.8" height="23.5" fill="#b5c0d5" />
<rect x="631.7" y="63.5" width="0.8" height="23.5" fill="#b5c0d5" />
<rect x="638.45" y="63.5" width="0.8" height="23.5" fill="#b5c0d5" />
<rect x="618.6" y="68.975" width="27" height="0.8" fill="#b5c0d5" />
<rect x="618.6" y="74.85" width="27" height="0.8" fill="#b5c0d5" />
<rect x="618.6" y="80.725" width="27" height="0.8" fill="#b5c0d5" />
<rect x="625.3" y="63.5" width="6.7" height="23.5" fill="#5a86e0" />
<rect x="625.3" y="63.5" width="6.7" height="6" fill="#e8503a" />
<rect x="625.3" y="75.3" width="11" height="6" fill="#e8503a" />
<rect x="632" y="69.5" width="5.5" height="5.8" fill="#5a86e0" />
<rect x="633.5" y="79" width="14" height="11" fill="#f4f4f4" stroke="#444" stroke-width="0.9" />
<text x="635" y="84.5" font-size="7.5" fill="#000" font-weight="bold" >≤</text>
<text x="640.3" y="84.3" font-size="6.5" fill="#000" font-weight="bold" >≠</text>
<text x="635" y="89.6" font-size="6.5" fill="#000" font-weight="bold" >=</text>
<text x="640" y="89.8" font-size="7" fill="#000" font-weight="bold" >&gt;</text>
<text x="603.6" y="107" font-size="11" fill="#15428b" textLength="60.4" lengthAdjust="spacingAndGlyphs" >Conditional</text>
<text x="601.6" y="119.5" font-size="11" fill="#15428b" textLength="56.4" lengthAdjust="spacingAndGlyphs" >Formatting</text>
<path d="M661 114.2 h5 l-2.5 2.8 z" fill="#4a6a9f" />
<rect x="680.5" y="63.5" width="28" height="23.5" fill="#f8f9fc" stroke="#9aa8c0" stroke-width="0.8" />
<rect x="687.1" y="63.5" width="0.8" height="23.5" fill="#b5c0d5" />
<rect x="694.1" y="63.5" width="0.8" height="23.5" fill="#b5c0d5" />
<rect x="701.1" y="63.5" width="0.8" height="23.5" fill="#b5c0d5" />
<rect x="680.5" y="68.975" width="28" height="0.8" fill="#b5c0d5" />
<rect x="680.5" y="74.85" width="28" height="0.8" fill="#b5c0d5" />
<rect x="680.5" y="80.725" width="28" height="0.8" fill="#b5c0d5" />
<rect x="687.5" y="69.4" width="21" height="17.6" fill="#a8c0f0" opacity="0.75"/>
<path d="M709.5 67.5 l-9 12 l3 2.2 l8.5 -12.5 z" fill="url(#g24)" stroke="#777" stroke-width="0.5" />
<path d="M700.5 79.5 l3 2.2 l-1.5 2.5 l-3.5 -2.3 z" fill="#9a6a2a" />
<path d="M698.5 81.7 l3.5 2.3 q-3.5 5 -9.5 4.5 q3.5 -2 6 -6.8 z" fill="#4a78d8" />
<text x="677.5" y="107" font-size="11" fill="#15428b" textLength="35.4" lengthAdjust="spacingAndGlyphs" >Format</text>
<text x="671.5" y="119.5" font-size="11" fill="#15428b" textLength="39.8" lengthAdjust="spacingAndGlyphs" >as Table</text>
<path d="M715 114.2 h5 l-2.5 2.8 z" fill="#4a6a9f" />
<rect x="728.5" y="63.5" width="28" height="23.5" fill="#f8f9fc" stroke="#9aa8c0" stroke-width="0.8" />
<rect x="735.1" y="63.5" width="0.8" height="23.5" fill="#b5c0d5" />
<rect x="742.1" y="63.5" width="0.8" height="23.5" fill="#b5c0d5" />
<rect x="749.1" y="63.5" width="0.8" height="23.5" fill="#b5c0d5" />
<rect x="728.5" y="68.975" width="28" height="0.8" fill="#b5c0d5" />
<rect x="728.5" y="74.85" width="28" height="0.8" fill="#b5c0d5" />
<rect x="728.5" y="80.725" width="28" height="0.8" fill="#b5c0d5" />
<rect x="733.5" y="67.5" width="18" height="14" fill="#9ab4f0" stroke="#7a94d0" stroke-width="0.6" />
<path d="M757.5 67.5 l-9 12 l3 2.2 l8.5 -12.5 z" fill="url(#g25)" stroke="#777" stroke-width="0.5" />
<path d="M748.5 79.5 l3 2.2 l-1.5 2.5 l-3.5 -2.3 z" fill="#9a6a2a" />
<path d="M746.5 81.7 l3.5 2.3 q-3.5 5 -9.5 4.5 q3.5 -2 6 -6.8 z" fill="#4a78d8" />
<text x="734.3" y="107" font-size="11" fill="#15428b" textLength="18.5" lengthAdjust="spacingAndGlyphs" >Cell</text>
<text x="725.5" y="119.5" font-size="11" fill="#15428b" textLength="27.9" lengthAdjust="spacingAndGlyphs" >Styles</text>
<path d="M756.9 114.2 h5 l-2.5 2.8 z" fill="#4a6a9f" />
<rect x="779" y="62.5" width="4.5" height="3.2" fill="#fdfdfe" stroke="#5a6880" stroke-width="0.8" />
<rect x="779" y="67.2" width="4.5" height="3.2" fill="#fdfdfe" stroke="#5a6880" stroke-width="0.8" />
<rect x="779" y="71.9" width="4.5" height="3.2" fill="#fdfdfe" stroke="#5a6880" stroke-width="0.8" />
<path d="M785 67 h3 m-3 0 l1.8 -1.5 m-1.8 1.5 l1.8 1.5" fill="none" stroke="#222" stroke-width="0.9" />
<rect x="788.5" y="65.2" width="6.5" height="3.3" fill="#cfe0fb" stroke="#3a5a9a" stroke-width="0.8" />
<text x="798.4" y="72.6" font-size="11" fill="#15428b" textLength="28.1" lengthAdjust="spacingAndGlyphs" >Insert</text>
<path d="M831.8 67.5 h5 l-2.5 2.8 z" fill="#4a6a9f" />
<rect x="779" y="84.5" width="4.5" height="3.2" fill="#fdfdfe" stroke="#5a6880" stroke-width="0.8" />
<rect x="779" y="89.2" width="4.5" height="3.2" fill="#fdfdfe" stroke="#5a6880" stroke-width="0.8" />
<rect x="779" y="93.9" width="4.5" height="3.2" fill="#fdfdfe" stroke="#5a6880" stroke-width="0.8" />
<rect x="784" y="86" width="4.5" height="3.2" fill="#dfe8f8" stroke="#5a6880" stroke-width="0.8" />
<path d="M788.5 84.5 l5.5 6 M794 84.5 l-5.5 6" fill="none" stroke="#e8402a" stroke-width="1.8" />
<text x="798.4" y="94.6" font-size="11" fill="#15428b" textLength="31.9" lengthAdjust="spacingAndGlyphs" >Delete</text>
<path d="M835.8 89.5 h5 l-2.5 2.8 z" fill="#4a6a9f" />
<rect x="779.5" y="107.5" width="14.5" height="11" fill="#fdfdfe" stroke="#5a6880" stroke-width="0.9" />
<path d="M779.5 111 h14.5 M779.5 115 h14.5 M784.3 107.5 v11 M789.2 107.5 v11" fill="none" stroke="#9aa8c0" stroke-width="0.7" />
<rect x="784.5" y="111.2" width="4.5" height="3.6" fill="#7a9ae8" />
<path d="M779 106 h15.5 M781 104.5 v3 M786.7 104.5 v3 M792.4 104.5 v3" fill="none" stroke="#222" stroke-width="0.8" stroke-dasharray="1 1"/>
<path d="M780.5 119.8 h6 v-1" fill="none" stroke="#555" stroke-width="0.8" />
<text x="798.4" y="116.5" font-size="11" fill="#15428b" textLength="35.5" lengthAdjust="spacingAndGlyphs" >Format</text>
<path d="M837.8 111.5 h5 l-2.5 2.8 z" fill="#4a6a9f" />
<text x="863.5" y="73.5" font-size="14" fill="#111" font-weight="bold" font-family="'Liberation Serif',serif" textLength="10.5" lengthAdjust="spacingAndGlyphs" >Σ</text>
<path d="M880.8 67.5 h5 l-2.5 2.8 z" fill="#4a6a9f" />
<rect x="862.8" y="84" width="11.5" height="14.5" fill="url(#g26)" stroke="#4a6aa8" stroke-width="1" />
<rect x="862.8" y="84" width="11.5" height="2.5" fill="#4a6aa8" />
<path d="M866.6 88.5 h4 v3.5 h2.6 l-4.6 4.6 l-4.6 -4.6 h2.6 z" fill="#2f5fd5" stroke="#1f3f95" stroke-width="0.5" />
<path d="M878.8 89.5 h5 l-2.5 2.8 z" fill="#4a6a9f" />
<path d="M863.5 114.5 l6.5 -6.5 h5 l-7 7.5 z" fill="#f4f4f8" stroke="#555" stroke-width="0.9" />
<path d="M868 118 h8" fill="none" stroke="#222" stroke-width="1.3" />
<path d="M863.5 114.5 q1 3 4.5 1" fill="none" stroke="#555" stroke-width="0.9" />
<path d="M878.8 111.5 h5 l-2.5 2.8 z" fill="#4a6a9f" />
<text x="895.5" y="75" font-size="18" fill="#2f4fa8" font-weight="bold" font-family="'Liberation Serif',serif" textLength="13" lengthAdjust="spacingAndGlyphs" >A</text>
<text x="896" y="90" font-size="18" fill="#a8342f" font-weight="bold" font-family="'Liberation Serif',serif" textLength="12" lengthAdjust="spacingAndGlyphs" >Z</text>
<path d="M904.5 68 h20.5 l-8 9.5 v9.5 l-4 -2 v-7.5 z" fill="url(#g27)" stroke="#66666c" stroke-width="0.6" />
<text x="894.9" y="107" font-size="11" fill="#15428b" textLength="31.5" lengthAdjust="spacingAndGlyphs" >Sort &amp;</text>
<text x="893.9" y="119.5" font-size="11" fill="#15428b" textLength="24.9" lengthAdjust="spacingAndGlyphs" >Filter</text>
<path d="M921.7 114.2 h5 l-2.5 2.8 z" fill="#4a6a9f" />
<rect x="941.5" y="65.5" width="5.5" height="5" fill="url(#g28)" stroke="#2f4a80" stroke-width="0.5" rx="1" />
<rect x="940.3" y="69.5" width="8" height="6" fill="url(#g28)" stroke="#2f4a80" stroke-width="0.5" rx="1" />
<rect x="938.5" y="74.5" width="11.5" height="13" fill="url(#g28)" stroke="#2f4a80" stroke-width="0.5" rx="1.5" />
<rect x="955.5" y="65.5" width="5.5" height="5" fill="url(#g28)" stroke="#2f4a80" stroke-width="0.5" rx="1" />
<rect x="954.3" y="69.5" width="8" height="6" fill="url(#g28)" stroke="#2f4a80" stroke-width="0.5" rx="1" />
<rect x="952.5" y="74.5" width="11.5" height="13" fill="url(#g28)" stroke="#2f4a80" stroke-width="0.5" rx="1.5" />
<rect x="949" y="74" width="4.5" height="6" fill="#4a6aa8" />
<text x="935.8" y="107" font-size="11" fill="#15428b" textLength="33.4" lengthAdjust="spacingAndGlyphs" >Find &amp;</text>
<text x="934.8" y="119.5" font-size="11" fill="#15428b" textLength="28.6" lengthAdjust="spacingAndGlyphs" >Select</text>
<path d="M966.7 114.2 h5 l-2.5 2.8 z" fill="#4a6a9f" />
<circle cx="29.2" cy="26.2" r="18.3" fill="#8792a6" />
<circle cx="29.2" cy="26.2" r="17.2" fill="url(#g29)" />
<circle cx="29.2" cy="26.2" r="16.5" fill="none" stroke="#ffffff" stroke-width="1" opacity="0.6"/>
<path d="M28.6 22.2 V18.6 Q28.6 16.4 26.4 16.4 H21.6 Q19.4 16.4 19.4 18.6 V23.3 Q19.4 25.5 21.6 25.5 H25.3" fill="none" stroke="url(#g30)" stroke-width="2.8" stroke-linecap="butt" stroke-linejoin="round"/>
<path d="M32 21.1 H35.6 Q36.9 21.1 36.9 22.4 V25.6 H35.8" fill="none" stroke="url(#g31)" stroke-width="2" stroke-linecap="butt" stroke-linejoin="round"/>
<path d="M25.8 29.4 H22.9 Q21.4 29.4 21.4 30.9 V35 Q21.4 36.5 22.9 36.5 H27.1 Q28.6 36.5 28.6 35 V32.8" fill="none" stroke="url(#g32)" stroke-width="2.7" stroke-linecap="butt" stroke-linejoin="round"/>
<path d="M35.2 29.3 H37.2 Q38.7 29.3 38.7 30.8 V34.2 Q38.7 35.7 37.2 35.7 H33.7 Q32.2 35.7 32.2 34.2 V32.8" fill="none" stroke="url(#g33)" stroke-width="2.7" stroke-linecap="butt" stroke-linejoin="round"/>
<circle cx="28.5" cy="25.4" r="1.35" fill="#ec5a12" />
<circle cx="32.5" cy="25.4" r="1.35" fill="#1f72d8" />
<circle cx="28.4" cy="29.5" r="1.35" fill="#fbb731" />
<circle cx="32.6" cy="29.5" r="1.35" fill="#6db82c" />
<rect x="8" y="144" width="1035.5" height="27.5" fill="#bcd4f1" />
<rect x="8" y="144" width="1035.5" height="2" fill="#9ebbe0" />
<rect x="8.5" y="146.5" width="1018.5" height="21" fill="#ffffff" stroke="#8aa7cf" stroke-width="1" />
<rect x="8" y="168.5" width="1035" height="2.5" fill="#dce9f8" />
<text x="70" y="161.5" font-size="12.5" fill="#000" textLength="15" lengthAdjust="spacingAndGlyphs" >T7</text>
<path d="M153 155.5 h8 l-4 4.5 z" fill="#000" />
<path d="M251.5 147 H179 Q167.5 147 167.5 157 Q167.5 167 179 167 H251.5 Z" fill="url(#g34)" stroke="#8aa7cf" stroke-width="1" />
<circle cx="177" cy="156.7" r="3.9" fill="url(#g35)" />
<text x="233.5" y="161" font-size="13.5" fill="#444" font-weight="bold" font-family="'Liberation Serif',serif" font-style="italic" >f</text>
<text x="238.2" y="161.5" font-size="8.5" fill="#444" font-weight="bold" font-family="'Liberation Serif',serif" font-style="italic" >x</text>
<rect x="1028" y="147" width="15" height="20" fill="url(#g36)" stroke="#8aa7cf" stroke-width="1" />
<path d="M1032 153 l3.5 3.5 l3.5 -3.5 M1032 158 l3.5 3.5 l3.5 -3.5" fill="none" stroke="#000" stroke-width="1.6" />
<rect x="32" y="183.5" width="996" height="855.5" fill="#ffffff" />
<rect x="8" y="171" width="1019.5" height="12.5" fill="url(#g37)" />
<rect x="8" y="171" width="1019.5" height="1" fill="#9eb6ce" />
<rect x="8" y="183" width="1019.5" height="1" fill="#9eb6ce" />
<rect x="8" y="172" width="23.5" height="11" fill="#a9c4e9" />
<rect x="9" y="173" width="21.5" height="9" fill="#b3cbee" stroke="#c7d9f3" stroke-width="1" />
<path d="M28 175.5 v5 h-5 z" fill="#dfe8f5" />
<rect x="76" y="172" width="1" height="11" fill="#9eb6ce" />
<text x="54.5" y="181.3" font-size="9.8" fill="#222" text-anchor="middle" >A</text>
<rect x="131" y="172" width="1" height="11" fill="#9eb6ce" />
<text x="104.25" y="181.3" font-size="9.8" fill="#222" text-anchor="middle" >B</text>
<rect x="183" y="172" width="1" height="11" fill="#9eb6ce" />
<text x="158" y="181.3" font-size="9.8" fill="#222" text-anchor="middle" >C</text>
<rect x="241" y="172" width="1" height="11" fill="#9eb6ce" />
<text x="213" y="181.3" font-size="9.8" fill="#222" text-anchor="middle" >D</text>
<rect x="294" y="172" width="1" height="11" fill="#9eb6ce" />
<text x="268.25" y="181.3" font-size="9.8" fill="#222" text-anchor="middle" >E</text>
<rect x="297" y="172" width="1" height="11" fill="#9eb6ce" />
<text x="296" y="181.5" font-size="9.8" fill="#222" clip-path="url(#clipF)">F</text>
<rect x="357" y="172" width="1" height="11" fill="#9eb6ce" />
<text x="328.45" y="181.3" font-size="9.8" fill="#222" text-anchor="middle" >G</text>
<rect x="415" y="172" width="1" height="11" fill="#9eb6ce" />
<text x="387.05" y="181.3" font-size="9.8" fill="#222" text-anchor="middle" >H</text>
<rect x="472" y="172" width="1" height="11" fill="#9eb6ce" />
<text x="444.15" y="181.3" font-size="9.8" fill="#222" text-anchor="middle" >I</text>
<rect x="549" y="172" width="1" height="11" fill="#9eb6ce" />
<text x="511.15" y="181.3" font-size="9.8" fill="#222" text-anchor="middle" >J</text>
<rect x="602" y="172" width="1" height="11" fill="#9eb6ce" />
<text x="576.2" y="181.3" font-size="9.8" fill="#222" text-anchor="middle" >K</text>
<rect x="654" y="172" width="1" height="11" fill="#9eb6ce" />
<text x="629.1" y="181.3" font-size="9.8" fill="#222" text-anchor="middle" >L</text>
<rect x="716" y="172" width="1" height="11" fill="#9eb6ce" />
<text x="686.1" y="181.3" font-size="9.8" fill="#222" text-anchor="middle" >M</text>
<rect x="776" y="172" width="1" height="11" fill="#9eb6ce" />
<text x="746.9" y="181.3" font-size="9.8" fill="#222" text-anchor="middle" >N</text>
<rect x="779" y="172" width="1" height="11" fill="#9eb6ce" />
<text x="778" y="181.5" font-size="9.8" fill="#222" clip-path="url(#clipO)">O</text>
<rect x="839" y="172" width="1" height="11" fill="#9eb6ce" />
<text x="810.45" y="181.3" font-size="9.8" fill="#222" text-anchor="middle" >P</text>
<rect x="900" y="172" width="1" height="11" fill="#9eb6ce" />
<text x="870.55" y="181.3" font-size="9.8" fill="#222" text-anchor="middle" >Q</text>
<rect x="960" y="172" width="1" height="11" fill="#9eb6ce" />
<text x="930.65" y="181.3" font-size="9.8" fill="#222" text-anchor="middle" >R</text>
<rect x="1012" y="172" width="1" height="11" fill="#9eb6ce" />
<text x="986.9" y="181.3" font-size="9.8" fill="#222" text-anchor="middle" >S</text>
<rect x="1013.2" y="172" width="14.3" height="11.5" fill="url(#g38)" />
<rect x="1013.2" y="172" width="1.5" height="11.5" fill="#f29536" />
<rect x="1013.2" y="182.5" width="14.3" height="1.5" fill="#f29536" />
<rect x="8" y="184" width="24" height="855" fill="#e4ecf7" />
<rect x="31" y="184" width="1" height="855" fill="#9eb6ce" />
<rect x="8" y="239" width="23.5" height="1" fill="#9eb6ce" />
<text x="20" y="235.7" font-size="9.8" fill="#222" text-anchor="middle" >1</text>
<rect x="8" y="295" width="23.5" height="1" fill="#9eb6ce" />
<text x="20" y="291.7" font-size="9.8" fill="#222" text-anchor="middle" >2</text>
<rect x="8" y="351" width="23.5" height="1" fill="#9eb6ce" />
<text x="20" y="347.7" font-size="9.8" fill="#222" text-anchor="middle" >3</text>
<rect x="8" y="407" width="23.5" height="1" fill="#9eb6ce" />
<text x="20" y="403.7" font-size="9.8" fill="#222" text-anchor="middle" >4</text>
<rect x="8" y="463" width="23.5" height="1" fill="#9eb6ce" />
<text x="20" y="459.7" font-size="9.8" fill="#222" text-anchor="middle" >5</text>
<rect x="8" y="519" width="23.5" height="1" fill="#9eb6ce" />
<text x="20" y="515.7" font-size="9.8" fill="#222" text-anchor="middle" >6</text>
<rect x="8" y="520" width="24" height="56" fill="#fbd28a" />
<rect x="8" y="520" width="24" height="56" fill="url(#g39)" />
<rect x="31" y="520" width="1.5" height="56" fill="#f29536" />
<rect x="8" y="575" width="24" height="1" fill="#f2a046" />
<text x="20" y="571.7" font-size="9.8" fill="#222" text-anchor="middle" >7</text>
<rect x="8" y="631" width="23.5" height="1" fill="#9eb6ce" />
<text x="20" y="627.7" font-size="9.8" fill="#222" text-anchor="middle" >8</text>
<rect x="8" y="687" width="23.5" height="1" fill="#9eb6ce" />
<text x="20" y="683.7" font-size="9.8" fill="#222" text-anchor="middle" >9</text>
<rect x="8" y="743" width="23.5" height="1" fill="#9eb6ce" />
<text x="20" y="739.7" font-size="9.8" fill="#222" text-anchor="middle" >10</text>
<rect x="8" y="799" width="23.5" height="1" fill="#9eb6ce" />
<text x="20" y="795.7" font-size="9.8" fill="#222" text-anchor="middle" >11</text>
<rect x="8" y="855" width="23.5" height="1" fill="#9eb6ce" />
<text x="20" y="851.7" font-size="9.8" fill="#222" text-anchor="middle" >12</text>
<rect x="8" y="869" width="23.5" height="1" fill="#9eb6ce" />
<text x="20" y="866.4" font-size="9.8" fill="#222" text-anchor="middle" clip-path="url(#clipR)">13</text>
<rect x="8" y="884" width="23.5" height="1" fill="#9eb6ce" />
<text x="20" y="881.4" font-size="9.8" fill="#222" text-anchor="middle" clip-path="url(#clipR)">14</text>
<rect x="8" y="899" width="23.5" height="1" fill="#9eb6ce" />
<text x="20" y="896.4" font-size="9.8" fill="#222" text-anchor="middle" clip-path="url(#clipR)">15</text>
<rect x="8" y="914" width="23.5" height="1" fill="#9eb6ce" />
<text x="20" y="911.4" font-size="9.8" fill="#222" text-anchor="middle" clip-path="url(#clipR)">16</text>
<rect x="8" y="930" width="23.5" height="1" fill="#9eb6ce" />
<text x="20" y="927.4" font-size="9.8" fill="#222" text-anchor="middle" clip-path="url(#clipR)">17</text>
<rect x="8" y="946" width="23.5" height="1" fill="#9eb6ce" />
<text x="20" y="943.4" font-size="9.8" fill="#222" text-anchor="middle" clip-path="url(#clipR)">18</text>
<rect x="8" y="961" width="23.5" height="1" fill="#9eb6ce" />
<text x="20" y="958.4" font-size="9.8" fill="#222" text-anchor="middle" clip-path="url(#clipR)">19</text>
<rect x="8" y="975" width="23.5" height="1" fill="#9eb6ce" />
<text x="20" y="972.4" font-size="9.8" fill="#222" text-anchor="middle" clip-path="url(#clipR)">20</text>
<rect x="8" y="989" width="23.5" height="1" fill="#9eb6ce" />
<text x="20" y="986.4" font-size="9.8" fill="#222" text-anchor="middle" clip-path="url(#clipR)">21</text>
<rect x="8" y="1003" width="23.5" height="1" fill="#9eb6ce" />
<text x="20" y="1000.4" font-size="9.8" fill="#222" text-anchor="middle" clip-path="url(#clipR)">22</text>
<rect x="8" y="1017" width="23.5" height="1" fill="#9eb6ce" />
<text x="20" y="1014.4" font-size="9.8" fill="#222" text-anchor="middle" clip-path="url(#clipR)">23</text>
<rect x="8" y="1031" width="23.5" height="1" fill="#9eb6ce" />
<text x="20" y="1028.4" font-size="9.8" fill="#222" text-anchor="middle" clip-path="url(#clipR)">24</text>
<rect x="8" y="1046" width="23.5" height="1" fill="#9eb6ce" />
<text x="20" y="1043.4" font-size="9.8" fill="#222" text-anchor="middle" clip-path="url(#clipR)">25</text>
<rect x="1013.5" y="519.5" width="20" height="56" fill="none" stroke="#000" stroke-width="3" />
<rect x="1027.5" y="171" width="15.5" height="868" fill="url(#g40)" />
<rect x="1028.5" y="171.5" width="14" height="9" fill="#fff" stroke="#a9c0e0" stroke-width="1" />
<rect x="1031.5" y="174.5" width="8" height="1.5" fill="#6f8fc0" />
<path d="M1031 191 h9 l-4.5 -5 z" fill="#3f4f7a" />
<path d="M1031 1028 h9 l-4.5 5 z" fill="#3f4f7a" />
<rect x="1028.5" y="197.5" width="13.5" height="49" fill="url(#g41)" stroke="#50628f" stroke-width="1" rx="1.5" />
<rect x="1032" y="217.5" width="8" height="1" fill="#6f6f78" />
<rect x="1032" y="219.7" width="8" height="1" fill="#6f6f78" />
<rect x="1032" y="221.9" width="8" height="1" fill="#6f6f78" />
<rect x="1032" y="224.1" width="8" height="1" fill="#6f6f78" />
<rect x="32.5" y="184.5" width="929" height="335" fill="#fff" stroke="#868686" stroke-width="1" />
<text x="495.5" y="206.9" font-size="15.8" fill="#000" text-anchor="middle" font-weight="bold" textLength="59" lengthAdjust="spacingAndGlyphs" >Exit MFE</text>
<rect x="94" y="223" width="802" height="1" fill="#868686" />
<text x="84.7" y="226.5" font-size="8.3" fill="#000" text-anchor="end" textLength="24.5" lengthAdjust="spacingAndGlyphs" stroke="#000" stroke-width="0.15">70000</text>
<rect x="94" y="260" width="802" height="1" fill="#868686" />
<text x="84.7" y="263.5" font-size="8.3" fill="#000" text-anchor="end" textLength="24.5" lengthAdjust="spacingAndGlyphs" stroke="#000" stroke-width="0.15">60000</text>
<rect x="94" y="298" width="802" height="1" fill="#868686" />
<text x="84.7" y="301.5" font-size="8.3" fill="#000" text-anchor="end" textLength="24.5" lengthAdjust="spacingAndGlyphs" stroke="#000" stroke-width="0.15">50000</text>
<rect x="94" y="335" width="802" height="1" fill="#868686" />
<text x="84.7" y="338.5" font-size="8.3" fill="#000" text-anchor="end" textLength="24.5" lengthAdjust="spacingAndGlyphs" stroke="#000" stroke-width="0.15">40000</text>
<rect x="94" y="373" width="802" height="1" fill="#868686" />
<text x="84.7" y="376.5" font-size="8.3" fill="#000" text-anchor="end" textLength="24.5" lengthAdjust="spacingAndGlyphs" stroke="#000" stroke-width="0.15">30000</text>
<rect x="94" y="410" width="802" height="1" fill="#868686" />
<text x="84.7" y="413.5" font-size="8.3" fill="#000" text-anchor="end" textLength="24.5" lengthAdjust="spacingAndGlyphs" stroke="#000" stroke-width="0.15">20000</text>
<rect x="94" y="448" width="802" height="1" fill="#868686" />
<text x="84.7" y="451.5" font-size="8.3" fill="#000" text-anchor="end" textLength="24.5" lengthAdjust="spacingAndGlyphs" stroke="#000" stroke-width="0.15">10000</text>
<rect x="94" y="485" width="802" height="1" fill="#868686" />
<text x="84.7" y="488.5" font-size="8.3" fill="#000" text-anchor="end" textLength="4.6" lengthAdjust="spacingAndGlyphs" stroke="#000" stroke-width="0.15">0</text>
<rect x="94" y="223" width="1" height="263" fill="#868686" />
<text x="0" y="0" font-size="8.6" fill="#000" text-anchor="middle" font-weight="bold" textLength="28" lengthAdjust="spacingAndGlyphs" transform="translate(54,353) rotate(-90)">Equity $</text>
<text x="0" y="0" font-size="8.3" fill="#000" text-anchor="end" textLength="4.5" lengthAdjust="spacingAndGlyphs" stroke="#000" stroke-width="0.15" transform="translate(99.6,495.3) rotate(-90)">1</text>
<text x="0" y="0" font-size="8.3" fill="#000" text-anchor="end" textLength="4.5" lengthAdjust="spacingAndGlyphs" stroke="#000" stroke-width="0.15" transform="translate(112.8,495.3) rotate(-90)">4</text>
<text x="0" y="0" font-size="8.3" fill="#000" text-anchor="end" textLength="4.5" lengthAdjust="spacingAndGlyphs" stroke="#000" stroke-width="0.15" transform="translate(126.0,495.3) rotate(-90)">7</text>
<text x="0" y="0" font-size="8.3" fill="#000" text-anchor="end" textLength="9.4" lengthAdjust="spacingAndGlyphs" stroke="#000" stroke-width="0.15" transform="translate(139.2,495.3) rotate(-90)">10</text>
<text x="0" y="0" font-size="8.3" fill="#000" text-anchor="end" textLength="9.4" lengthAdjust="spacingAndGlyphs" stroke="#000" stroke-width="0.15" transform="translate(152.4,495.3) rotate(-90)">13</text>
<text x="0" y="0" font-size="8.3" fill="#000" text-anchor="end" textLength="9.4" lengthAdjust="spacingAndGlyphs" stroke="#000" stroke-width="0.15" transform="translate(165.7,495.3) rotate(-90)">16</text>
<text x="0" y="0" font-size="8.3" fill="#000" text-anchor="end" textLength="9.4" lengthAdjust="spacingAndGlyphs" stroke="#000" stroke-width="0.15" transform="translate(178.9,495.3) rotate(-90)">19</text>
<text x="0" y="0" font-size="8.3" fill="#000" text-anchor="end" textLength="9.4" lengthAdjust="spacingAndGlyphs" stroke="#000" stroke-width="0.15" transform="translate(192.1,495.3) rotate(-90)">22</text>
<text x="0" y="0" font-size="8.3" fill="#000" text-anchor="end" textLength="9.4" lengthAdjust="spacingAndGlyphs" stroke="#000" stroke-width="0.15" transform="translate(205.3,495.3) rotate(-90)">25</text>
<text x="0" y="0" font-size="8.3" fill="#000" text-anchor="end" textLength="9.4" lengthAdjust="spacingAndGlyphs" stroke="#000" stroke-width="0.15" transform="translate(218.5,495.3) rotate(-90)">28</text>
<text x="0" y="0" font-size="8.3" fill="#000" text-anchor="end" textLength="9.4" lengthAdjust="spacingAndGlyphs" stroke="#000" stroke-width="0.15" transform="translate(231.7,495.3) rotate(-90)">31</text>
<text x="0" y="0" font-size="8.3" fill="#000" text-anchor="end" textLength="9.4" lengthAdjust="spacingAndGlyphs" stroke="#000" stroke-width="0.15" transform="translate(244.9,495.3) rotate(-90)">34</text>
<text x="0" y="0" font-size="8.3" fill="#000" text-anchor="end" textLength="9.4" lengthAdjust="spacingAndGlyphs" stroke="#000" stroke-width="0.15" transform="translate(258.1,495.3) rotate(-90)">37</text>
<text x="0" y="0" font-size="8.3" fill="#000" text-anchor="end" textLength="9.4" lengthAdjust="spacingAndGlyphs" stroke="#000" stroke-width="0.15" transform="translate(271.3,495.3) rotate(-90)">40</text>
<text x="0" y="0" font-size="8.3" fill="#000" text-anchor="end" textLength="9.4" lengthAdjust="spacingAndGlyphs" stroke="#000" stroke-width="0.15" transform="translate(284.5,495.3) rotate(-90)">43</text>
<text x="0" y="0" font-size="8.3" fill="#000" text-anchor="end" textLength="9.4" lengthAdjust="spacingAndGlyphs" stroke="#000" stroke-width="0.15" transform="translate(297.8,495.3) rotate(-90)">46</text>
<text x="0" y="0" font-size="8.3" fill="#000" text-anchor="end" textLength="9.4" lengthAdjust="spacingAndGlyphs" stroke="#000" stroke-width="0.15" transform="translate(311.0,495.3) rotate(-90)">49</text>
<text x="0" y="0" font-size="8.3" fill="#000" text-anchor="end" textLength="9.4" lengthAdjust="spacingAndGlyphs" stroke="#000" stroke-width="0.15" transform="translate(324.2,495.3) rotate(-90)">52</text>
<text x="0" y="0" font-size="8.3" fill="#000" text-anchor="end" textLength="9.4" lengthAdjust="spacingAndGlyphs" stroke="#000" stroke-width="0.15" transform="translate(337.4,495.3) rotate(-90)">55</text>
<text x="0" y="0" font-size="8.3" fill="#000" text-anchor="end" textLength="9.4" lengthAdjust="spacingAndGlyphs" stroke="#000" stroke-width="0.15" transform="translate(350.6,495.3) rotate(-90)">58</text>
<text x="0" y="0" font-size="8.3" fill="#000" text-anchor="end" textLength="9.4" lengthAdjust="spacingAndGlyphs" stroke="#000" stroke-width="0.15" transform="translate(363.8,495.3) rotate(-90)">61</text>
<text x="0" y="0" font-size="8.3" fill="#000" text-anchor="end" textLength="9.4" lengthAdjust="spacingAndGlyphs" stroke="#000" stroke-width="0.15" transform="translate(377.0,495.3) rotate(-90)">64</text>
<text x="0" y="0" font-size="8.3" fill="#000" text-anchor="end" textLength="9.4" lengthAdjust="spacingAndGlyphs" stroke="#000" stroke-width="0.15" transform="translate(390.2,495.3) rotate(-90)">67</text>
<text x="0" y="0" font-size="8.3" fill="#000" text-anchor="end" textLength="9.4" lengthAdjust="spacingAndGlyphs" stroke="#000" stroke-width="0.15" transform="translate(403.4,495.3) rotate(-90)">70</text>
<text x="0" y="0" font-size="8.3" fill="#000" text-anchor="end" textLength="9.4" lengthAdjust="spacingAndGlyphs" stroke="#000" stroke-width="0.15" transform="translate(416.6,495.3) rotate(-90)">73</text>
<text x="0" y="0" font-size="8.3" fill="#000" text-anchor="end" textLength="9.4" lengthAdjust="spacingAndGlyphs" stroke="#000" stroke-width="0.15" transform="translate(429.8,495.3) rotate(-90)">76</text>
<text x="0" y="0" font-size="8.3" fill="#000" text-anchor="end" textLength="9.4" lengthAdjust="spacingAndGlyphs" stroke="#000" stroke-width="0.15" transform="translate(443.1,495.3) rotate(-90)">79</text>
<text x="0" y="0" font-size="8.3" fill="#000" text-anchor="end" textLength="9.4" lengthAdjust="spacingAndGlyphs" stroke="#000" stroke-width="0.15" transform="translate(456.3,495.3) rotate(-90)">82</text>
<text x="0" y="0" font-size="8.3" fill="#000" text-anchor="end" textLength="9.4" lengthAdjust="spacingAndGlyphs" stroke="#000" stroke-width="0.15" transform="translate(469.5,495.3) rotate(-90)">85</text>
<text x="0" y="0" font-size="8.3" fill="#000" text-anchor="end" textLength="9.4" lengthAdjust="spacingAndGlyphs" stroke="#000" stroke-width="0.15" transform="translate(482.7,495.3) rotate(-90)">88</text>
<text x="0" y="0" font-size="8.3" fill="#000" text-anchor="end" textLength="9.4" lengthAdjust="spacingAndGlyphs" stroke="#000" stroke-width="0.15" transform="translate(495.9,495.3) rotate(-90)">91</text>
<text x="0" y="0" font-size="8.3" fill="#000" text-anchor="end" textLength="9.4" lengthAdjust="spacingAndGlyphs" stroke="#000" stroke-width="0.15" transform="translate(509.1,495.3) rotate(-90)">94</text>
<text x="0" y="0" font-size="8.3" fill="#000" text-anchor="end" textLength="9.4" lengthAdjust="spacingAndGlyphs" stroke="#000" stroke-width="0.15" transform="translate(522.3,495.3) rotate(-90)">97</text>
<text x="0" y="0" font-size="8.3" fill="#000" text-anchor="end" textLength="14.1" lengthAdjust="spacingAndGlyphs" stroke="#000" stroke-width="0.15" transform="translate(535.5,495.3) rotate(-90)">100</text>
<text x="0" y="0" font-size="8.3" fill="#000" text-anchor="end" textLength="14.1" lengthAdjust="spacingAndGlyphs" stroke="#000" stroke-width="0.15" transform="translate(548.7,495.3) rotate(-90)">103</text>
<text x="0" y="0" font-size="8.3" fill="#000" text-anchor="end" textLength="14.1" lengthAdjust="spacingAndGlyphs" stroke="#000" stroke-width="0.15" transform="translate(561.9,495.3) rotate(-90)">106</text>
<text x="0" y="0" font-size="8.3" fill="#000" text-anchor="end" textLength="14.1" lengthAdjust="spacingAndGlyphs" stroke="#000" stroke-width="0.15" transform="translate(575.2,495.3) rotate(-90)">109</text>
<text x="0" y="0" font-size="8.3" fill="#000" text-anchor="end" textLength="14.1" lengthAdjust="spacingAndGlyphs" stroke="#000" stroke-width="0.15" transform="translate(588.4,495.3) rotate(-90)">112</text>
<text x="0" y="0" font-size="8.3" fill="#000" text-anchor="end" textLength="14.1" lengthAdjust="spacingAndGlyphs" stroke="#000" stroke-width="0.15" transform="translate(601.6,495.3) rotate(-90)">115</text>
<text x="0" y="0" font-size="8.3" fill="#000" text-anchor="end" textLength="14.1" lengthAdjust="spacingAndGlyphs" stroke="#000" stroke-width="0.15" transform="translate(614.8,495.3) rotate(-90)">118</text>
<text x="0" y="0" font-size="8.3" fill="#000" text-anchor="end" textLength="14.1" lengthAdjust="spacingAndGlyphs" stroke="#000" stroke-width="0.15" transform="translate(628.0,495.3) rotate(-90)">121</text>
<text x="0" y="0" font-size="8.3" fill="#000" text-anchor="end" textLength="14.1" lengthAdjust="spacingAndGlyphs" stroke="#000" stroke-width="0.15" transform="translate(641.2,495.3) rotate(-90)">124</text>
<text x="0" y="0" font-size="8.3" fill="#000" text-anchor="end" textLength="14.1" lengthAdjust="spacingAndGlyphs" stroke="#000" stroke-width="0.15" transform="translate(654.4,495.3) rotate(-90)">127</text>
<text x="0" y="0" font-size="8.3" fill="#000" text-anchor="end" textLength="14.1" lengthAdjust="spacingAndGlyphs" stroke="#000" stroke-width="0.15" transform="translate(667.6,495.3) rotate(-90)">130</text>
<text x="0" y="0" font-size="8.3" fill="#000" text-anchor="end" textLength="14.1" lengthAdjust="spacingAndGlyphs" stroke="#000" stroke-width="0.15" transform="translate(680.8,495.3) rotate(-90)">133</text>
<text x="0" y="0" font-size="8.3" fill="#000" text-anchor="end" textLength="14.1" lengthAdjust="spacingAndGlyphs" stroke="#000" stroke-width="0.15" transform="translate(694.0,495.3) rotate(-90)">136</text>
<text x="0" y="0" font-size="8.3" fill="#000" text-anchor="end" textLength="14.1" lengthAdjust="spacingAndGlyphs" stroke="#000" stroke-width="0.15" transform="translate(707.3,495.3) rotate(-90)">139</text>
<text x="0" y="0" font-size="8.3" fill="#000" text-anchor="end" textLength="14.1" lengthAdjust="spacingAndGlyphs" stroke="#000" stroke-width="0.15" transform="translate(720.5,495.3) rotate(-90)">142</text>
<text x="0" y="0" font-size="8.3" fill="#000" text-anchor="end" textLength="14.1" lengthAdjust="spacingAndGlyphs" stroke="#000" stroke-width="0.15" transform="translate(733.7,495.3) rotate(-90)">145</text>
<text x="0" y="0" font-size="8.3" fill="#000" text-anchor="end" textLength="14.1" lengthAdjust="spacingAndGlyphs" stroke="#000" stroke-width="0.15" transform="translate(746.9,495.3) rotate(-90)">148</text>
<text x="0" y="0" font-size="8.3" fill="#000" text-anchor="end" textLength="14.1" lengthAdjust="spacingAndGlyphs" stroke="#000" stroke-width="0.15" transform="translate(760.1,495.3) rotate(-90)">151</text>
<text x="0" y="0" font-size="8.3" fill="#000" text-anchor="end" textLength="14.1" lengthAdjust="spacingAndGlyphs" stroke="#000" stroke-width="0.15" transform="translate(773.3,495.3) rotate(-90)">154</text>
<text x="0" y="0" font-size="8.3" fill="#000" text-anchor="end" textLength="14.1" lengthAdjust="spacingAndGlyphs" stroke="#000" stroke-width="0.15" transform="translate(786.5,495.3) rotate(-90)">157</text>
<text x="0" y="0" font-size="8.3" fill="#000" text-anchor="end" textLength="14.1" lengthAdjust="spacingAndGlyphs" stroke="#000" stroke-width="0.15" transform="translate(799.7,495.3) rotate(-90)">160</text>
<text x="0" y="0" font-size="8.3" fill="#000" text-anchor="end" textLength="14.1" lengthAdjust="spacingAndGlyphs" stroke="#000" stroke-width="0.15" transform="translate(812.9,495.3) rotate(-90)">163</text>
<text x="0" y="0" font-size="8.3" fill="#000" text-anchor="end" textLength="14.1" lengthAdjust="spacingAndGlyphs" stroke="#000" stroke-width="0.15" transform="translate(826.1,495.3) rotate(-90)">166</text>
<text x="0" y="0" font-size="8.3" fill="#000" text-anchor="end" textLength="14.1" lengthAdjust="spacingAndGlyphs" stroke="#000" stroke-width="0.15" transform="translate(839.4,495.3) rotate(-90)">169</text>
<text x="0" y="0" font-size="8.3" fill="#000" text-anchor="end" textLength="14.1" lengthAdjust="spacingAndGlyphs" stroke="#000" stroke-width="0.15" transform="translate(852.6,495.3) rotate(-90)">172</text>
<text x="0" y="0" font-size="8.3" fill="#000" text-anchor="end" textLength="14.1" lengthAdjust="spacingAndGlyphs" stroke="#000" stroke-width="0.15" transform="translate(865.8,495.3) rotate(-90)">175</text>
<text x="0" y="0" font-size="8.3" fill="#000" text-anchor="end" textLength="14.1" lengthAdjust="spacingAndGlyphs" stroke="#000" stroke-width="0.15" transform="translate(879.0,495.3) rotate(-90)">178</text>
<text x="0" y="0" font-size="8.3" fill="#000" text-anchor="end" textLength="14.1" lengthAdjust="spacingAndGlyphs" stroke="#000" stroke-width="0.15" transform="translate(892.2,495.3) rotate(-90)">181</text>
<polyline points="97.2,463.9 101.6,464.3 106.0,462.7 110.0,461.1 114.4,462.7 119.0,463.5 123.4,462.9 128.0,463.9 132.4,461.7 137.0,458.9 141.3,455.3 145.5,451.5 149.7,447.9 153.9,445.1 158.5,447.1 162.9,444.3 167.1,442.1 171.5,443.9 175.9,445.9 180.9,446.9 184.9,445.1 189.3,443.1 193.9,445.1 197.9,440.9 202.9,442.9 206.9,441.3 211.3,438.1 215.9,433.9 220.3,429.3 224.5,424.7 228.9,420.0 233.5,417.4 237.9,420.1 242.2,417.0 246.8,414.2 251.2,417.2 255.8,412.0 260.2,415.2 264.4,417.2 268.8,419.0 273.2,422.1 277.8,419.6 282.2,416.6 286.8,412.0 290.8,409.2 295.4,402.0 299.4,396.9 303.6,391.9 308.0,386.9 313.0,382.9 317.4,385.9 322.0,389.1 326.0,383.9 330.0,386.9 335.0,382.1 339.4,385.1 343.9,387.9 347.9,380.9 352.3,383.9 356.9,377.9 361.3,380.9 365.9,375.9 370.3,379.1 374.3,373.9 378.9,373.9 382.9,368.0 387.9,371.1 391.9,365.0 396.3,356.8 400.9,356.8 405.3,350.2 409.9,343.4 414.3,347.4 418.9,351.0 423.3,354.6 427.9,358.4 431.9,361.0 436.3,357.0 440.2,360.0 444.8,353.6 449.2,349.2 453.8,352.0 458.2,352.0 462.2,346.0 466.8,348.6 471.2,352.2 475.8,356.0 479.8,351.0 484.2,354.0 488.8,346.0 493.2,350.0 498.0,344.3 503.0,339.3 506.6,333.9 511.0,325.9 515.0,321.1 520.0,312.0 524.4,305.0 529.0,307.6 533.0,312.0 537.4,307.0 541.9,310.6 545.9,315.2 550.9,307.6 554.9,300.0 559.3,305.0 563.9,297.0 568.3,301.0 572.9,296.0 577.3,301.0 581.3,293.0 586.3,297.0 590.3,290.0 594.9,293.6 599.1,298.2 603.3,303.0 608.3,295.0 612.3,295.0 616.9,300.0 621.3,291.6 625.3,287.0 629.9,290.6 634.3,285.6 638.9,289.6 643.2,285.6 647.8,289.6 651.8,289.6 656.2,294.0 660.8,294.0 664.8,298.0 668.8,298.0 673.4,302.0 677.8,306.0 682.8,301.0 686.8,301.0 690.8,301.0 695.8,305.0 700.0,295.9 705.0,292.3 709.0,295.9 713.4,295.9 718.0,291.3 722.4,294.9 727.0,287.4 731.0,291.9 735.6,284.0 740.0,284.0 743.9,288.0 748.9,283.0 753.3,288.0 757.3,288.0 761.9,279.6 766.3,274.0 770.9,274.0 775.3,269.0 779.9,269.0 784.3,274.0 788.3,265.0 792.9,260.0 797.3,250.6 801.9,250.6 806.3,255.6 809.9,256.0 814.9,260.6 819.3,266.0 823.5,485.4 895.4,485.4" fill="none" stroke="#4a7ebb" stroke-width="2.0" stroke-linejoin="round" stroke-linecap="round"/>
<polyline points="97.2,464.3 101.6,465.1 106.0,463.9 110.0,462.9 114.4,463.9 119.0,464.3 123.4,463.5 128.0,463.9 132.4,463.1 137.0,462.1 141.3,460.9 145.5,459.7 149.7,458.1 153.9,456.9 158.5,457.9 162.9,456.9 167.1,455.9 171.5,456.9 175.9,457.9 180.9,457.9 184.9,457.1 189.3,456.9 193.9,456.9 197.9,456.1 202.9,456.9 206.9,456.1 211.3,455.1 215.9,454.1 220.3,453.1 224.5,452.1 228.9,449.9 233.5,449.9 237.9,449.9 242.2,449.9 246.8,449.3 251.2,450.1 255.8,449.3 260.2,449.3 264.4,450.1 268.8,450.1 273.2,451.1 277.8,450.3 282.2,449.3 286.8,448.3 290.8,447.9 295.4,446.1 299.4,444.7 303.6,443.7 308.0,442.7 317.0,442.7 322.0,444.1 326.0,443.1 330.0,443.1 335.0,441.9 339.0,443.1 343.9,442.9 347.9,441.7 352.3,442.9 356.9,440.7 361.3,441.9 365.9,440.9 370.3,441.9 374.3,440.9 378.9,440.9 382.9,439.1 387.9,440.1 391.9,439.3 396.3,438.3 400.9,438.3 404.9,437.3 409.9,435.3 414.3,436.1 417.9,436.1 422.3,437.1 426.9,437.9 439.9,437.9 444.8,436.9 449.2,435.9 453.8,436.9 458.2,436.9 462.2,435.7 466.8,435.9 470.8,436.9 484.2,436.7 488.8,435.9 493.2,435.7 494.0,436.0 498.0,435.0 503.0,434.8 506.6,434.0 511.0,431.6 515.0,431.4 520.0,429.6 524.0,428.8 528.0,430.0 541.9,429.8 545.9,431.0 550.9,430.0 554.9,429.0 559.3,428.8 563.9,428.0 568.3,428.8 572.9,428.0 577.3,428.8 581.3,427.8 586.3,427.8 590.3,426.8 594.9,427.6 598.9,428.0 603.3,429.0 608.3,427.8 612.3,428.0 616.9,429.0 621.3,427.8 625.3,426.6 649.8,426.6 655.8,428.0 667.8,428.0 672.8,429.0 695.8,429.0 700.4,427.9 705.0,426.9 709.0,427.9 713.4,427.9 718.0,426.9 722.4,427.9 727.0,426.9 731.0,426.7 735.6,425.7 740.0,425.9 743.9,426.9 748.9,425.9 753.3,426.9 757.3,426.9 761.9,425.9 766.3,424.9 770.9,424.7 775.3,423.7 779.9,423.9 784.3,424.9 788.5,423.9 792.9,422.7 797.3,421.7 800.9,421.7 806.3,422.9 814.9,422.9 819.3,423.9 823.5,485.5 895.4,485.5" fill="none" stroke="#be4b48" stroke-width="2.0" stroke-linejoin="round" stroke-linecap="round"/>
<polyline points="97.2,464.3 101.6,464.9 106.0,463.5 110.0,462.3 114.4,463.5 119.0,464.7 123.4,463.9 128.0,464.7 132.4,462.5 137.0,460.3 141.3,457.3 145.5,453.9 149.7,450.9 153.9,448.9 158.5,449.9 162.9,447.5 167.1,446.1 171.5,447.5 175.9,449.9 180.9,451.9 184.9,449.1 189.3,447.9 193.9,449.7 197.9,446.9 202.9,449.1 206.9,446.9 211.3,443.9 215.9,441.3 220.3,437.5 224.5,434.3 228.9,430.5 233.5,428.3 237.9,430.1 242.2,427.9 246.8,425.1 251.2,427.9 255.8,423.9 260.2,426.3 264.4,429.1 268.8,430.9 273.2,434.1 277.8,431.5 282.2,429.1 286.8,424.9 290.8,422.9 295.4,419.0 299.6,415.1 304.0,410.9 308.4,407.5 313.0,405.1 317.4,408.1 322.0,411.1 326.0,406.3 330.0,409.1 335.0,405.3 339.4,408.1 343.9,411.1 347.9,405.1 352.3,407.9 356.9,402.7 361.3,405.9 365.9,401.9 370.3,405.1 374.3,400.3 378.9,401.1 382.9,395.1 387.9,398.1 391.9,393.1 396.3,387.9 400.9,387.9 405.3,382.9 409.9,378.1 414.3,381.1 418.9,384.1 423.3,387.1 427.9,390.1 431.9,392.9 436.3,389.9 440.2,393.1 444.8,388.3 449.2,384.9 453.8,387.9 458.2,387.9 462.2,383.1 466.8,385.5 471.2,388.7 475.8,391.9 479.8,388.1 484.2,391.1 488.8,384.9 493.2,388.9 498.0,384.3 502.4,380.9 506.6,377.5 511.0,371.1 515.0,368.3 520.0,361.5 524.4,356.1 529.0,358.7 533.0,362.1 537.4,359.1 541.9,361.9 545.9,366.1 550.9,359.9 554.9,355.1 559.3,358.9 563.9,353.1 568.3,356.1 572.9,353.1 577.3,357.1 581.3,351.1 586.3,354.9 590.3,349.9 594.9,352.5 599.1,356.3 603.3,360.1 608.3,354.9 612.3,354.9 616.9,358.9 621.3,352.9 625.3,350.1 629.9,352.9 634.3,349.1 638.9,352.9 643.2,350.1 647.8,352.9 651.8,352.9 656.2,356.9 660.8,356.9 664.8,359.9 668.8,360.1 673.4,363.5 677.8,367.1 682.8,362.9 686.8,362.9 690.8,362.9 695.8,367.1 700.0,361.3 705.0,357.3 709.0,360.9 713.4,360.9 718.0,357.3 722.4,360.9 727.0,355.3 731.0,358.9 735.6,353.3 740.0,353.3 743.9,356.9 748.9,353.3 753.3,356.9 757.3,356.9 761.9,351.9 766.3,347.3 770.9,346.9 775.3,343.9 779.9,343.9 784.3,347.3 788.3,342.3 792.9,338.5 797.3,333.1 801.9,333.1 806.3,336.9 809.9,337.1 814.9,339.9 819.3,343.9 823.5,485.4 895.4,485.4" fill="none" stroke="#98b954" stroke-width="2.0" stroke-linejoin="round" stroke-linecap="round"/>
<line x1="910" y1="349.1" x2="928.3" y2="349.1" stroke="#4a7ebb" stroke-width="1.3" />
<text x="930.1" y="352.1" font-size="8.6" fill="#000" textLength="8.5" lengthAdjust="spacingAndGlyphs" stroke="#000" stroke-width="0.2">PS</text>
<line x1="910" y1="366.3" x2="928.3" y2="366.3" stroke="#be4b48" stroke-width="1.3" />
<text x="930.1" y="369.3" font-size="8.6" fill="#000" textLength="21" lengthAdjust="spacingAndGlyphs" stroke="#000" stroke-width="0.2">no PS</text>
<line x1="910" y1="383.2" x2="928.3" y2="383.2" stroke="#98b954" stroke-width="1.3" />
<text x="930.1" y="386.2" font-size="8.6" fill="#000" textLength="17.8" lengthAdjust="spacingAndGlyphs" stroke="#000" stroke-width="0.2">REAL</text>
<rect x="32.5" y="531.5" width="929" height="325" fill="#fff" stroke="#868686" stroke-width="1" />
<text x="495.5" y="553.9" font-size="15.8" fill="#000" text-anchor="middle" font-weight="bold" textLength="64" lengthAdjust="spacingAndGlyphs" >Exit 1-2-3</text>
<rect x="94" y="570" width="805" height="1" fill="#868686" />
<text x="84.7" y="573.5" font-size="8.3" fill="#000" text-anchor="end" textLength="24.5" lengthAdjust="spacingAndGlyphs" stroke="#000" stroke-width="0.15">60000</text>
<rect x="94" y="612" width="805" height="1" fill="#868686" />
<text x="84.7" y="615.5" font-size="8.3" fill="#000" text-anchor="end" textLength="24.5" lengthAdjust="spacingAndGlyphs" stroke="#000" stroke-width="0.15">50000</text>
<rect x="94" y="654" width="805" height="1" fill="#868686" />
<text x="84.7" y="657.5" font-size="8.3" fill="#000" text-anchor="end" textLength="24.5" lengthAdjust="spacingAndGlyphs" stroke="#000" stroke-width="0.15">40000</text>
<rect x="94" y="696" width="805" height="1" fill="#868686" />
<text x="84.7" y="699.5" font-size="8.3" fill="#000" text-anchor="end" textLength="24.5" lengthAdjust="spacingAndGlyphs" stroke="#000" stroke-width="0.15">30000</text>
<rect x="94" y="739" width="805" height="1" fill="#868686" />
<text x="84.7" y="742.5" font-size="8.3" fill="#000" text-anchor="end" textLength="24.5" lengthAdjust="spacingAndGlyphs" stroke="#000" stroke-width="0.15">20000</text>
<rect x="94" y="781" width="805" height="1" fill="#868686" />
<text x="84.7" y="784.5" font-size="8.3" fill="#000" text-anchor="end" textLength="24.5" lengthAdjust="spacingAndGlyphs" stroke="#000" stroke-width="0.15">10000</text>
<rect x="94" y="823" width="805" height="1" fill="#868686" />
<text x="84.7" y="826.5" font-size="8.3" fill="#000" text-anchor="end" textLength="4.6" lengthAdjust="spacingAndGlyphs" stroke="#000" stroke-width="0.15">0</text>
<rect x="94" y="570" width="1" height="254" fill="#868686" />
<text x="0" y="0" font-size="8.6" fill="#000" text-anchor="middle" font-weight="bold" textLength="28" lengthAdjust="spacingAndGlyphs" transform="translate(54,697) rotate(-90)">Equity $</text>
<text x="0" y="0" font-size="8.3" fill="#000" text-anchor="end" textLength="4.5" lengthAdjust="spacingAndGlyphs" stroke="#000" stroke-width="0.15" transform="translate(99.6,832.3) rotate(-90)">1</text>
<text x="0" y="0" font-size="8.3" fill="#000" text-anchor="end" textLength="4.5" lengthAdjust="spacingAndGlyphs" stroke="#000" stroke-width="0.15" transform="translate(112.9,832.3) rotate(-90)">4</text>
<text x="0" y="0" font-size="8.3" fill="#000" text-anchor="end" textLength="4.5" lengthAdjust="spacingAndGlyphs" stroke="#000" stroke-width="0.15" transform="translate(126.1,832.3) rotate(-90)">7</text>
<text x="0" y="0" font-size="8.3" fill="#000" text-anchor="end" textLength="9.4" lengthAdjust="spacingAndGlyphs" stroke="#000" stroke-width="0.15" transform="translate(139.4,832.3) rotate(-90)">10</text>
<text x="0" y="0" font-size="8.3" fill="#000" text-anchor="end" textLength="9.4" lengthAdjust="spacingAndGlyphs" stroke="#000" stroke-width="0.15" transform="translate(152.6,832.3) rotate(-90)">13</text>
<text x="0" y="0" font-size="8.3" fill="#000" text-anchor="end" textLength="9.4" lengthAdjust="spacingAndGlyphs" stroke="#000" stroke-width="0.15" transform="translate(165.9,832.3) rotate(-90)">16</text>
<text x="0" y="0" font-size="8.3" fill="#000" text-anchor="end" textLength="9.4" lengthAdjust="spacingAndGlyphs" stroke="#000" stroke-width="0.15" transform="translate(179.1,832.3) rotate(-90)">19</text>
<text x="0" y="0" font-size="8.3" fill="#000" text-anchor="end" textLength="9.4" lengthAdjust="spacingAndGlyphs" stroke="#000" stroke-width="0.15" transform="translate(192.4,832.3) rotate(-90)">22</text>
<text x="0" y="0" font-size="8.3" fill="#000" text-anchor="end" textLength="9.4" lengthAdjust="spacingAndGlyphs" stroke="#000" stroke-width="0.15" transform="translate(205.6,832.3) rotate(-90)">25</text>
<text x="0" y="0" font-size="8.3" fill="#000" text-anchor="end" textLength="9.4" lengthAdjust="spacingAndGlyphs" stroke="#000" stroke-width="0.15" transform="translate(218.9,832.3) rotate(-90)">28</text>
<text x="0" y="0" font-size="8.3" fill="#000" text-anchor="end" textLength="9.4" lengthAdjust="spacingAndGlyphs" stroke="#000" stroke-width="0.15" transform="translate(232.1,832.3) rotate(-90)">31</text>
<text x="0" y="0" font-size="8.3" fill="#000" text-anchor="end" textLength="9.4" lengthAdjust="spacingAndGlyphs" stroke="#000" stroke-width="0.15" transform="translate(245.4,832.3) rotate(-90)">34</text>
<text x="0" y="0" font-size="8.3" fill="#000" text-anchor="end" textLength="9.4" lengthAdjust="spacingAndGlyphs" stroke="#000" stroke-width="0.15" transform="translate(258.6,832.3) rotate(-90)">37</text>
<text x="0" y="0" font-size="8.3" fill="#000" text-anchor="end" textLength="9.4" lengthAdjust="spacingAndGlyphs" stroke="#000" stroke-width="0.15" transform="translate(271.9,832.3) rotate(-90)">40</text>
<text x="0" y="0" font-size="8.3" fill="#000" text-anchor="end" textLength="9.4" lengthAdjust="spacingAndGlyphs" stroke="#000" stroke-width="0.15" transform="translate(285.1,832.3) rotate(-90)">43</text>
<text x="0" y="0" font-size="8.3" fill="#000" text-anchor="end" textLength="9.4" lengthAdjust="spacingAndGlyphs" stroke="#000" stroke-width="0.15" transform="translate(298.4,832.3) rotate(-90)">46</text>
<text x="0" y="0" font-size="8.3" fill="#000" text-anchor="end" textLength="9.4" lengthAdjust="spacingAndGlyphs" stroke="#000" stroke-width="0.15" transform="translate(311.7,832.3) rotate(-90)">49</text>
<text x="0" y="0" font-size="8.3" fill="#000" text-anchor="end" textLength="9.4" lengthAdjust="spacingAndGlyphs" stroke="#000" stroke-width="0.15" transform="translate(324.9,832.3) rotate(-90)">52</text>
<text x="0" y="0" font-size="8.3" fill="#000" text-anchor="end" textLength="9.4" lengthAdjust="spacingAndGlyphs" stroke="#000" stroke-width="0.15" transform="translate(338.2,832.3) rotate(-90)">55</text>
<text x="0" y="0" font-size="8.3" fill="#000" text-anchor="end" textLength="9.4" lengthAdjust="spacingAndGlyphs" stroke="#000" stroke-width="0.15" transform="translate(351.4,832.3) rotate(-90)">58</text>
<text x="0" y="0" font-size="8.3" fill="#000" text-anchor="end" textLength="9.4" lengthAdjust="spacingAndGlyphs" stroke="#000" stroke-width="0.15" transform="translate(364.7,832.3) rotate(-90)">61</text>
<text x="0" y="0" font-size="8.3" fill="#000" text-anchor="end" textLength="9.4" lengthAdjust="spacingAndGlyphs" stroke="#000" stroke-width="0.15" transform="translate(377.9,832.3) rotate(-90)">64</text>
<text x="0" y="0" font-size="8.3" fill="#000" text-anchor="end" textLength="9.4" lengthAdjust="spacingAndGlyphs" stroke="#000" stroke-width="0.15" transform="translate(391.2,832.3) rotate(-90)">67</text>
<text x="0" y="0" font-size="8.3" fill="#000" text-anchor="end" textLength="9.4" lengthAdjust="spacingAndGlyphs" stroke="#000" stroke-width="0.15" transform="translate(404.4,832.3) rotate(-90)">70</text>
<text x="0" y="0" font-size="8.3" fill="#000" text-anchor="end" textLength="9.4" lengthAdjust="spacingAndGlyphs" stroke="#000" stroke-width="0.15" transform="translate(417.7,832.3) rotate(-90)">73</text>
<text x="0" y="0" font-size="8.3" fill="#000" text-anchor="end" textLength="9.4" lengthAdjust="spacingAndGlyphs" stroke="#000" stroke-width="0.15" transform="translate(430.9,832.3) rotate(-90)">76</text>
<text x="0" y="0" font-size="8.3" fill="#000" text-anchor="end" textLength="9.4" lengthAdjust="spacingAndGlyphs" stroke="#000" stroke-width="0.15" transform="translate(444.2,832.3) rotate(-90)">79</text>
<text x="0" y="0" font-size="8.3" fill="#000" text-anchor="end" textLength="9.4" lengthAdjust="spacingAndGlyphs" stroke="#000" stroke-width="0.15" transform="translate(457.4,832.3) rotate(-90)">82</text>
<text x="0" y="0" font-size="8.3" fill="#000" text-anchor="end" textLength="9.4" lengthAdjust="spacingAndGlyphs" stroke="#000" stroke-width="0.15" transform="translate(470.7,832.3) rotate(-90)">85</text>
<text x="0" y="0" font-size="8.3" fill="#000" text-anchor="end" textLength="9.4" lengthAdjust="spacingAndGlyphs" stroke="#000" stroke-width="0.15" transform="translate(483.9,832.3) rotate(-90)">88</text>
<text x="0" y="0" font-size="8.3" fill="#000" text-anchor="end" textLength="9.4" lengthAdjust="spacingAndGlyphs" stroke="#000" stroke-width="0.15" transform="translate(497.2,832.3) rotate(-90)">91</text>
<text x="0" y="0" font-size="8.3" fill="#000" text-anchor="end" textLength="9.4" lengthAdjust="spacingAndGlyphs" stroke="#000" stroke-width="0.15" transform="translate(510.4,832.3) rotate(-90)">94</text>
<text x="0" y="0" font-size="8.3" fill="#000" text-anchor="end" textLength="9.4" lengthAdjust="spacingAndGlyphs" stroke="#000" stroke-width="0.15" transform="translate(523.7,832.3) rotate(-90)">97</text>
<text x="0" y="0" font-size="8.3" fill="#000" text-anchor="end" textLength="14.1" lengthAdjust="spacingAndGlyphs" stroke="#000" stroke-width="0.15" transform="translate(536.9,832.3) rotate(-90)">100</text>
<text x="0" y="0" font-size="8.3" fill="#000" text-anchor="end" textLength="14.1" lengthAdjust="spacingAndGlyphs" stroke="#000" stroke-width="0.15" transform="translate(550.2,832.3) rotate(-90)">103</text>
<text x="0" y="0" font-size="8.3" fill="#000" text-anchor="end" textLength="14.1" lengthAdjust="spacingAndGlyphs" stroke="#000" stroke-width="0.15" transform="translate(563.5,832.3) rotate(-90)">106</text>
<text x="0" y="0" font-size="8.3" fill="#000" text-anchor="end" textLength="14.1" lengthAdjust="spacingAndGlyphs" stroke="#000" stroke-width="0.15" transform="translate(576.7,832.3) rotate(-90)">109</text>
<text x="0" y="0" font-size="8.3" fill="#000" text-anchor="end" textLength="14.1" lengthAdjust="spacingAndGlyphs" stroke="#000" stroke-width="0.15" transform="translate(590.0,832.3) rotate(-90)">112</text>
<text x="0" y="0" font-size="8.3" fill="#000" text-anchor="end" textLength="14.1" lengthAdjust="spacingAndGlyphs" stroke="#000" stroke-width="0.15" transform="translate(603.2,832.3) rotate(-90)">115</text>
<text x="0" y="0" font-size="8.3" fill="#000" text-anchor="end" textLength="14.1" lengthAdjust="spacingAndGlyphs" stroke="#000" stroke-width="0.15" transform="translate(616.5,832.3) rotate(-90)">118</text>
<text x="0" y="0" font-size="8.3" fill="#000" text-anchor="end" textLength="14.1" lengthAdjust="spacingAndGlyphs" stroke="#000" stroke-width="0.15" transform="translate(629.7,832.3) rotate(-90)">121</text>
<text x="0" y="0" font-size="8.3" fill="#000" text-anchor="end" textLength="14.1" lengthAdjust="spacingAndGlyphs" stroke="#000" stroke-width="0.15" transform="translate(643.0,832.3) rotate(-90)">124</text>
<text x="0" y="0" font-size="8.3" fill="#000" text-anchor="end" textLength="14.1" lengthAdjust="spacingAndGlyphs" stroke="#000" stroke-width="0.15" transform="translate(656.2,832.3) rotate(-90)">127</text>
<text x="0" y="0" font-size="8.3" fill="#000" text-anchor="end" textLength="14.1" lengthAdjust="spacingAndGlyphs" stroke="#000" stroke-width="0.15" transform="translate(669.5,832.3) rotate(-90)">130</text>
<text x="0" y="0" font-size="8.3" fill="#000" text-anchor="end" textLength="14.1" lengthAdjust="spacingAndGlyphs" stroke="#000" stroke-width="0.15" transform="translate(682.7,832.3) rotate(-90)">133</text>
<text x="0" y="0" font-size="8.3" fill="#000" text-anchor="end" textLength="14.1" lengthAdjust="spacingAndGlyphs" stroke="#000" stroke-width="0.15" transform="translate(696.0,832.3) rotate(-90)">136</text>
<text x="0" y="0" font-size="8.3" fill="#000" text-anchor="end" textLength="14.1" lengthAdjust="spacingAndGlyphs" stroke="#000" stroke-width="0.15" transform="translate(709.2,832.3) rotate(-90)">139</text>
<text x="0" y="0" font-size="8.3" fill="#000" text-anchor="end" textLength="14.1" lengthAdjust="spacingAndGlyphs" stroke="#000" stroke-width="0.15" transform="translate(722.5,832.3) rotate(-90)">142</text>
<text x="0" y="0" font-size="8.3" fill="#000" text-anchor="end" textLength="14.1" lengthAdjust="spacingAndGlyphs" stroke="#000" stroke-width="0.15" transform="translate(735.7,832.3) rotate(-90)">145</text>
<text x="0" y="0" font-size="8.3" fill="#000" text-anchor="end" textLength="14.1" lengthAdjust="spacingAndGlyphs" stroke="#000" stroke-width="0.15" transform="translate(749.0,832.3) rotate(-90)">148</text>
<text x="0" y="0" font-size="8.3" fill="#000" text-anchor="end" textLength="14.1" lengthAdjust="spacingAndGlyphs" stroke="#000" stroke-width="0.15" transform="translate(762.2,832.3) rotate(-90)">151</text>
<text x="0" y="0" font-size="8.3" fill="#000" text-anchor="end" textLength="14.1" lengthAdjust="spacingAndGlyphs" stroke="#000" stroke-width="0.15" transform="translate(775.5,832.3) rotate(-90)">154</text>
<text x="0" y="0" font-size="8.3" fill="#000" text-anchor="end" textLength="14.1" lengthAdjust="spacingAndGlyphs" stroke="#000" stroke-width="0.15" transform="translate(788.8,832.3) rotate(-90)">157</text>
<text x="0" y="0" font-size="8.3" fill="#000" text-anchor="end" textLength="14.1" lengthAdjust="spacingAndGlyphs" stroke="#000" stroke-width="0.15" transform="translate(802.0,832.3) rotate(-90)">160</text>
<text x="0" y="0" font-size="8.3" fill="#000" text-anchor="end" textLength="14.1" lengthAdjust="spacingAndGlyphs" stroke="#000" stroke-width="0.15" transform="translate(815.3,832.3) rotate(-90)">163</text>
<text x="0" y="0" font-size="8.3" fill="#000" text-anchor="end" textLength="14.1" lengthAdjust="spacingAndGlyphs" stroke="#000" stroke-width="0.15" transform="translate(828.5,832.3) rotate(-90)">166</text>
<text x="0" y="0" font-size="8.3" fill="#000" text-anchor="end" textLength="14.1" lengthAdjust="spacingAndGlyphs" stroke="#000" stroke-width="0.15" transform="translate(841.8,832.3) rotate(-90)">169</text>
<text x="0" y="0" font-size="8.3" fill="#000" text-anchor="end" textLength="14.1" lengthAdjust="spacingAndGlyphs" stroke="#000" stroke-width="0.15" transform="translate(855.0,832.3) rotate(-90)">172</text>
<text x="0" y="0" font-size="8.3" fill="#000" text-anchor="end" textLength="14.1" lengthAdjust="spacingAndGlyphs" stroke="#000" stroke-width="0.15" transform="translate(868.3,832.3) rotate(-90)">175</text>
<text x="0" y="0" font-size="8.3" fill="#000" text-anchor="end" textLength="14.1" lengthAdjust="spacingAndGlyphs" stroke="#000" stroke-width="0.15" transform="translate(881.5,832.3) rotate(-90)">178</text>
<text x="0" y="0" font-size="8.3" fill="#000" text-anchor="end" textLength="14.1" lengthAdjust="spacingAndGlyphs" stroke="#000" stroke-width="0.15" transform="translate(894.8,832.3) rotate(-90)">181</text>
<polyline points="97.0,799.9 101.0,800.5 105.4,799.9 109.6,798.9 114.0,800.5 119.0,802.3 123.4,802.9 128.0,803.5 132.0,800.9 137.0,797.9 141.3,793.9 145.9,789.9 150.3,791.3 153.9,786.9 158.9,789.1 163.5,782.3 167.9,782.3 172.3,784.5 176.7,786.9 180.9,789.1 185.3,784.9 189.9,783.9 193.9,785.9 198.9,783.9 202.9,785.9 207.3,785.9 211.9,779.9 216.3,776.9 220.9,775.1 224.9,765.9 229.3,757.9 233.9,753.9 238.3,756.9 242.8,748.0 247.2,749.0 251.8,750.0 255.8,744.0 260.4,746.8 264.8,749.6 269.2,752.1 273.8,754.9 278.8,750.9 282.8,747.6 286.8,744.4 291.8,743.0 295.8,740.0 300.0,727.9 304.0,718.9 309.0,714.9 313.0,701.0 317.6,704.4 322.0,707.6 327.0,709.0 331.0,711.9 335.6,708.6 340.0,711.5 343.9,716.1 348.9,710.0 352.9,710.9 357.3,708.0 361.9,711.9 365.9,711.9 370.9,715.3 375.3,710.9 379.9,709.0 383.9,692.0 387.9,696.0 392.9,696.0 397.3,690.0 401.9,690.0 405.9,687.0 409.9,672.4 414.9,676.0 419.5,681.4 423.9,685.0 427.9,689.0 431.9,693.0 436.9,693.0 440.8,697.4 445.4,686.6 449.8,676.0 454.8,681.0 458.8,681.0 463.2,678.0 467.8,681.4 472.2,686.0 476.8,690.4 480.8,676.0 485.2,680.0 489.8,670.0 494.2,674.0 498.6,667.6 503.0,643.0 508.0,641.0 512.0,637.0 516.0,626.6 521.0,627.6 525.0,626.6 529.0,631.0 534.0,637.0 538.0,635.6 542.9,640.0 546.9,645.2 551.9,642.0 555.9,637.6 560.9,641.0 564.9,639.0 568.9,644.0 573.5,644.0 577.9,648.6 582.3,649.0 586.9,653.5 590.9,644.0 595.5,648.4 600.3,652.7 604.9,657.1 609.3,641.0 613.9,640.0 617.9,641.0 621.9,632.0 626.9,631.0 630.9,636.0 635.9,635.0 639.9,640.0 643.8,640.0 648.8,645.0 652.8,645.0 657.8,650.0 661.8,648.6 665.8,652.9 670.8,652.9 675.4,656.5 679.8,659.9 683.8,631.0 688.2,632.0 692.8,630.0 696.8,635.0 702.0,628.9 706.0,617.0 711.0,621.0 715.0,615.0 719.0,609.0 724.0,614.0 728.0,606.0 733.0,610.0 737.0,612.0 741.3,605.0 745.9,608.0 749.9,601.0 754.9,605.6 759.3,607.0 763.9,609.0 768.3,603.0 772.3,601.0 776.9,602.0 780.9,601.0 785.9,606.0 790.3,593.0 794.9,591.6 799.3,588.6 803.3,590.0 807.9,595.0 812.3,592.0 816.9,596.0 820.9,601.0 825.1,823.6 897.8,823.6" fill="none" stroke="#4a7ebb" stroke-width="2.0" stroke-linejoin="round" stroke-linecap="round"/>
<polyline points="97.0,800.5 105.4,800.5 109.6,799.9 119.0,801.1 128.0,802.3 132.0,800.5 137.0,799.3 145.9,797.3 150.3,797.1 153.9,796.3 158.9,796.1 167.9,794.1 175.9,796.1 180.9,796.1 185.3,795.1 207.3,795.1 216.3,792.3 220.9,791.9 229.3,786.9 233.9,786.1 238.3,785.9 242.8,784.3 247.2,784.1 251.8,785.1 255.8,783.1 264.8,784.9 268.8,784.9 273.8,785.9 286.8,783.1 295.8,781.9 300.0,778.9 304.0,776.9 309.0,776.9 313.0,774.1 318.0,775.1 327.0,775.1 331.0,776.1 335.6,775.1 343.9,777.1 348.9,776.1 352.9,776.1 357.3,775.1 361.9,775.9 365.9,775.9 370.9,777.1 379.9,775.1 383.9,772.3 387.9,773.3 392.9,773.3 397.3,772.3 401.9,772.1 405.9,771.1 409.9,768.9 414.9,768.9 419.5,770.3 426.9,770.9 431.9,771.9 436.9,772.1 440.8,773.3 449.8,768.9 454.8,769.9 458.8,769.9 463.2,769.1 467.8,769.9 472.8,771.1 476.8,771.1 480.8,769.3 485.2,769.9 489.8,768.1 494.2,768.9 498.6,767.7 503.0,763.0 512.0,763.0 516.0,760.8 525.0,760.8 534.0,763.0 538.0,762.0 546.9,764.4 551.9,763.0 564.9,763.0 568.9,764.0 582.3,764.0 586.9,765.2 590.9,764.0 595.9,764.0 604.9,766.4 609.3,763.0 617.9,763.0 626.9,761.0 630.9,762.0 635.9,762.0 639.9,763.0 652.8,763.0 657.8,764.0 661.8,764.0 665.8,765.0 673.8,765.0 679.8,766.4 683.8,761.0 692.8,761.0 696.8,762.0 702.0,760.9 706.0,758.9 711.0,759.9 719.0,757.9 724.0,758.9 728.0,757.1 733.0,757.9 737.0,757.9 741.3,756.9 745.9,757.9 749.9,756.9 754.9,756.9 759.3,757.9 763.9,757.9 768.3,756.9 785.9,756.9 790.3,755.9 794.9,754.5 803.3,754.5 807.9,755.9 812.3,754.7 816.9,755.5 820.9,756.9 825.1,823.9 897.8,823.9" fill="none" stroke="#be4b48" stroke-width="2.0" stroke-linejoin="round" stroke-linecap="round"/>
<polyline points="97.0,799.9 101.0,801.1 105.4,800.5 109.6,799.9 114.0,800.9 119.0,802.9 123.4,803.1 128.0,804.1 132.0,801.9 137.0,798.9 141.3,796.9 145.9,793.9 150.3,793.5 153.9,790.9 158.9,793.1 163.5,787.9 167.9,787.9 172.3,789.9 176.7,791.9 180.9,793.9 185.3,791.1 189.9,790.1 193.9,791.9 198.9,790.1 202.9,791.9 207.3,791.9 211.9,787.5 216.3,785.1 220.9,783.1 224.9,775.9 229.3,769.9 233.9,766.9 238.3,768.9 242.8,762.1 247.2,763.1 251.8,763.9 255.8,758.9 260.4,761.7 264.8,764.5 269.2,767.1 273.8,769.9 278.8,766.9 282.8,763.9 286.8,761.1 291.8,759.9 295.8,757.5 300.0,747.9 304.0,740.9 309.0,737.9 313.0,726.9 318.0,729.9 322.0,733.9 327.0,733.9 331.0,737.9 335.6,734.9 340.0,737.5 343.9,742.1 348.9,737.9 352.9,738.9 357.3,736.9 361.9,739.9 365.9,739.9 370.9,743.3 375.3,739.9 379.9,739.1 383.9,723.9 387.9,727.9 392.9,726.9 397.3,722.9 401.9,722.9 405.9,720.9 409.9,711.1 414.9,713.9 419.5,717.9 423.9,720.9 427.9,724.3 431.9,727.9 436.9,727.9 440.8,732.1 445.4,723.5 449.8,714.9 454.8,718.9 458.8,718.9 463.2,716.9 467.8,719.5 472.8,723.9 476.8,726.9 480.8,716.9 485.2,719.9 489.8,712.9 494.2,716.9 498.6,712.3 503.0,695.1 508.0,693.9 512.0,690.9 516.0,684.1 521.0,685.1 525.0,684.1 529.0,687.1 534.0,692.1 538.0,690.9 542.9,694.9 546.9,699.1 551.9,697.1 555.9,694.9 560.9,697.1 564.9,696.1 568.9,699.9 573.5,699.9 577.9,703.9 582.3,703.9 586.9,707.3 590.9,701.1 595.9,703.9 599.9,707.9 604.9,711.1 609.3,698.9 613.9,698.9 617.9,699.9 621.9,693.9 626.9,692.9 630.9,697.9 635.9,697.1 639.9,701.1 643.8,701.1 648.8,703.9 652.8,703.9 657.8,708.1 661.8,707.1 665.8,711.1 670.8,709.9 675.4,713.5 679.8,717.1 683.8,696.1 688.2,697.1 692.8,696.1 696.8,698.9 702.0,696.3 706.0,687.3 711.0,690.1 715.0,686.1 719.0,682.3 724.0,685.9 728.0,680.9 733.0,682.9 737.0,684.9 741.3,680.1 745.9,682.9 749.9,678.1 754.9,681.9 759.3,683.1 763.9,684.1 768.3,679.9 772.3,678.9 776.9,679.9 780.9,678.9 785.9,683.9 790.3,674.1 794.9,672.9 799.3,671.1 803.3,672.1 807.9,675.9 812.3,673.9 816.9,677.3 820.9,681.3 825.1,823.6 897.8,823.6" fill="none" stroke="#98b954" stroke-width="2.0" stroke-linejoin="round" stroke-linecap="round"/>
<line x1="912.2" y1="691.1" x2="930.3" y2="691.1" stroke="#4a7ebb" stroke-width="1.3" />
<text x="933" y="694.1" font-size="8.6" fill="#000" textLength="8.5" lengthAdjust="spacingAndGlyphs" stroke="#000" stroke-width="0.2">PS</text>
<line x1="912.2" y1="708.1" x2="930.3" y2="708.1" stroke="#be4b48" stroke-width="1.3" />
<text x="933" y="711.1" font-size="8.6" fill="#000" textLength="19" lengthAdjust="spacingAndGlyphs" stroke="#000" stroke-width="0.2">noPS</text>
<line x1="912.2" y1="725" x2="930.3" y2="725" stroke="#98b954" stroke-width="1.3" />
<text x="933" y="728" font-size="8.6" fill="#000" textLength="17.8" lengthAdjust="spacingAndGlyphs" stroke="#000" stroke-width="0.2">REAL</text>
<g clip-path="url(#clipT)">
<rect x="75.5" y="883.3" width="110" height="31.7" fill="#000" />
<rect x="77.4" y="885.7" width="52.2" height="12.7" fill="#e6b9b8" />
<rect x="77.4" y="900.9" width="52.2" height="11.7" fill="#fff" />
<text x="103.5" y="895.2" font-size="9.6" fill="#000" text-anchor="middle" textLength="21.5" lengthAdjust="spacingAndGlyphs" >Delta</text>
<text x="103.5" y="909.8" font-size="9.4" fill="#000" text-anchor="middle" textLength="19.5" lengthAdjust="spacingAndGlyphs" >2000</text>
<rect x="132.3" y="885.7" width="51.1" height="12.7" fill="#e6b9b8" />
<rect x="132.3" y="900.9" width="51.1" height="11.7" fill="#fff" />
<text x="157.85" y="895.2" font-size="9.6" fill="#000" text-anchor="middle" textLength="35" lengthAdjust="spacingAndGlyphs" >Account</text>
<text x="157.85" y="909.8" font-size="9.4" fill="#000" text-anchor="middle" textLength="19.5" lengthAdjust="spacingAndGlyphs" >5500</text>
<rect x="75.4" y="913" width="219.6" height="18" fill="#8eb4e3" />
<rect x="75.4" y="916" width="219.6" height="13" fill="#4f81bd" />
<rect x="75.4" y="931" width="219.6" height="120" fill="#8eb4e3" />
<rect x="75.4" y="913" width="219.6" height="1" fill="#000" />
<rect x="75.4" y="915" width="219.6" height="1" fill="#000" />
<rect x="75.4" y="929" width="219.6" height="1" fill="#000" />
<rect x="75.4" y="931" width="219.6" height="1" fill="#000" />
<rect x="75.4" y="945" width="219.6" height="1" fill="#000" />
<rect x="75.4" y="947" width="219.6" height="1" fill="#000" />
<rect x="75.4" y="961" width="219.6" height="1" fill="#000" />
<rect x="75.4" y="975" width="219.6" height="1" fill="#000" />
<rect x="75.4" y="989" width="219.6" height="1" fill="#000" />
<rect x="75.4" y="1003" width="219.6" height="1" fill="#000" />
<rect x="75.4" y="1017" width="219.6" height="1" fill="#000" />
<rect x="75.4" y="1031" width="219.6" height="1" fill="#000" />
<rect x="75.4" y="913" width="2" height="140" fill="#000" />
<rect x="294" y="913" width="1" height="19" fill="#000" />
<rect x="294" y="945" width="1" height="110" fill="#000" />
<rect x="131" y="931" width="1" height="123" fill="#000" />
<rect x="184" y="931" width="1" height="123" fill="#000" />
<rect x="241" y="931" width="1" height="123" fill="#000" />
<g clip-path="url(#c42)">
<text x="185.2" y="926.3" font-size="10.6" fill="#17375d" text-anchor="middle" font-weight="bold" textLength="112" lengthAdjust="spacingAndGlyphs" >Position Sizing - exit MFE</text>
</g>
<g clip-path="url(#c43)">
<text x="103.7" y="942" font-size="9.6" fill="#000" text-anchor="middle" textLength="35" lengthAdjust="spacingAndGlyphs" >ExitMFE</text>
</g>
<g clip-path="url(#c44)">
<text x="158" y="942" font-size="9.6" fill="#000" text-anchor="middle" textLength="29" lengthAdjust="spacingAndGlyphs" ># contr</text>
</g>
<g clip-path="url(#c45)">
<text x="213" y="942" font-size="9.6" fill="#000" text-anchor="middle" textLength="59" lengthAdjust="spacingAndGlyphs" >Bankrol-no PS</text>
</g>
<g clip-path="url(#c46)">
<text x="268" y="942" font-size="10" fill="#000" text-anchor="middle" font-weight="bold" textLength="60" lengthAdjust="spacingAndGlyphs" stroke="#000" stroke-width="0.45">Bankroll-PS</text>
</g>
<text x="103.7" y="957.2" font-size="9.3" fill="#000" text-anchor="middle" textLength="14" lengthAdjust="spacingAndGlyphs" >235</text>
<text x="158" y="957.2" font-size="7.6" fill="#000" text-anchor="middle" >2</text>
<text x="213" y="957.2" font-size="9.3" fill="#000" text-anchor="middle" textLength="19.5" lengthAdjust="spacingAndGlyphs" >5735</text>
<text x="268" y="957.2" font-size="10" fill="#000" text-anchor="middle" font-weight="bold" textLength="23" lengthAdjust="spacingAndGlyphs" stroke="#000" stroke-width="0.5">5970</text>
<text x="103.7" y="971.2" font-size="9.3" fill="#ff0000" text-anchor="middle" textLength="14" lengthAdjust="spacingAndGlyphs" >135</text>
<text x="158" y="971.2" font-size="7.6" fill="#000" text-anchor="middle" >2</text>
<text x="213" y="971.2" font-size="9.3" fill="#000" text-anchor="middle" textLength="19.5" lengthAdjust="spacingAndGlyphs" >5600</text>
<text x="268" y="971.2" font-size="10" fill="#000" text-anchor="middle" font-weight="bold" textLength="23" lengthAdjust="spacingAndGlyphs" stroke="#000" stroke-width="0.5">5700</text>
<text x="103.7" y="985.2" font-size="9.3" fill="#000" text-anchor="middle" textLength="14" lengthAdjust="spacingAndGlyphs" >235</text>
<text x="158" y="985.2" font-size="7.6" fill="#000" text-anchor="middle" >2</text>
<text x="213" y="985.2" font-size="9.3" fill="#000" text-anchor="middle" textLength="19.5" lengthAdjust="spacingAndGlyphs" >5835</text>
<text x="268" y="985.2" font-size="10" fill="#000" text-anchor="middle" font-weight="bold" textLength="23" lengthAdjust="spacingAndGlyphs" stroke="#000" stroke-width="0.5">6170</text>
<text x="103.7" y="999.2" font-size="9.3" fill="#000" text-anchor="middle" textLength="14" lengthAdjust="spacingAndGlyphs" >185</text>
<text x="158" y="999.2" font-size="7.6" fill="#000" text-anchor="middle" >3</text>
<text x="213" y="999.2" font-size="9.3" fill="#000" text-anchor="middle" textLength="19.5" lengthAdjust="spacingAndGlyphs" >6020</text>
<text x="268" y="999.2" font-size="10" fill="#000" text-anchor="middle" font-weight="bold" textLength="23" lengthAdjust="spacingAndGlyphs" stroke="#000" stroke-width="0.5">6725</text>
<text x="103.7" y="1013.2" font-size="9.3" fill="#ff0000" text-anchor="middle" textLength="14" lengthAdjust="spacingAndGlyphs" >165</text>
<text x="158" y="1013.2" font-size="7.6" fill="#000" text-anchor="middle" >3</text>
<text x="213" y="1013.2" font-size="9.3" fill="#000" text-anchor="middle" textLength="19.5" lengthAdjust="spacingAndGlyphs" >5855</text>
<text x="268" y="1013.2" font-size="10" fill="#000" text-anchor="middle" font-weight="bold" textLength="23" lengthAdjust="spacingAndGlyphs" stroke="#000" stroke-width="0.5">6230</text>
<text x="103.7" y="1027.2" font-size="9.3" fill="#ff0000" text-anchor="middle" textLength="14" lengthAdjust="spacingAndGlyphs" >155</text>
<text x="158" y="1027.2" font-size="7.6" fill="#000" text-anchor="middle" >3</text>
<text x="213" y="1027.2" font-size="9.3" fill="#000" text-anchor="middle" textLength="19.5" lengthAdjust="spacingAndGlyphs" >5700</text>
<text x="268" y="1027.2" font-size="10" fill="#000" text-anchor="middle" font-weight="bold" textLength="23" lengthAdjust="spacingAndGlyphs" stroke="#000" stroke-width="0.5">5765</text>
<text x="103.7" y="1041.4" font-size="9.3" fill="#000" text-anchor="middle" textLength="14" lengthAdjust="spacingAndGlyphs" >195</text>
<text x="158" y="1041.4" font-size="7.6" fill="#000" text-anchor="middle" >3</text>
<text x="213" y="1041.4" font-size="9.3" fill="#000" text-anchor="middle" textLength="19.5" lengthAdjust="spacingAndGlyphs" >5895</text>
<text x="268" y="1041.4" font-size="10" fill="#000" text-anchor="middle" font-weight="bold" textLength="23" lengthAdjust="spacingAndGlyphs" stroke="#000" stroke-width="0.5">6125</text>
<rect x="297.1" y="883.3" width="119.7" height="31.5" fill="#000" />
<rect x="299.5" y="886" width="57.2" height="12.4" fill="#ebf1de" />
<rect x="299.5" y="900.9" width="57.2" height="11.2" fill="#ebf1de" />
<text x="328.1" y="895.2" font-size="9.6" fill="#000" text-anchor="middle" textLength="49" lengthAdjust="spacingAndGlyphs" >%down-loss</text>
<text x="328.1" y="909.8" font-size="9.4" fill="#000" text-anchor="middle" textLength="12" lengthAdjust="spacingAndGlyphs" >0%</text>
<rect x="359.3" y="886" width="54.7" height="12.4" fill="#ebf1de" />
<rect x="359.3" y="900.9" width="54.7" height="11.2" fill="#ebf1de" />
<text x="386.65" y="895.2" font-size="9.6" fill="#000" text-anchor="middle" textLength="45" lengthAdjust="spacingAndGlyphs" >%down-win</text>
<text x="386.65" y="909.8" font-size="9.4" fill="#000" text-anchor="middle" textLength="17" lengthAdjust="spacingAndGlyphs" >15%</text>
<rect x="298" y="913" width="175" height="18" fill="#c3d69b" />
<rect x="298" y="916" width="175" height="13" fill="#c3d69b" />
<rect x="298" y="931" width="175" height="120" fill="#c3d69b" />
<rect x="298" y="913" width="175" height="1" fill="#000" />
<rect x="298" y="915" width="175" height="1" fill="#000" />
<rect x="298" y="929" width="175" height="1" fill="#000" />
<rect x="298" y="931" width="175" height="1" fill="#000" />
<rect x="298" y="945" width="175" height="1" fill="#000" />
<rect x="298" y="947" width="175" height="1" fill="#000" />
<rect x="298" y="961" width="175" height="1" fill="#000" />
<rect x="298" y="975" width="175" height="1" fill="#000" />
<rect x="298" y="989" width="175" height="1" fill="#000" />
<rect x="298" y="1003" width="175" height="1" fill="#000" />
<rect x="298" y="1017" width="175" height="1" fill="#000" />
<rect x="298" y="1031" width="175" height="1" fill="#000" />
<rect x="298" y="913" width="1" height="140" fill="#000" />
<rect x="472" y="913" width="1" height="19" fill="#000" />
<rect x="472" y="945" width="1" height="110" fill="#000" />
<rect x="358" y="931" width="1" height="123" fill="#000" />
<rect x="415" y="931" width="1" height="123" fill="#000" />
<g clip-path="url(#c47)">
<text x="387" y="926.3" font-size="10.8" fill="#000" text-anchor="middle" font-weight="bold" textLength="204" lengthAdjust="spacingAndGlyphs" stroke="#000" stroke-width="0.35">REAL TRADING ERRORS-SIMULATION</text>
</g>
<g clip-path="url(#c48)">
<text x="328.5" y="942" font-size="10" fill="#000" text-anchor="middle" font-weight="bold" textLength="45" lengthAdjust="spacingAndGlyphs" stroke="#000" stroke-width="0.45">Exit MFE</text>
</g>
<g clip-path="url(#c49)">
<text x="387" y="942" font-size="10" fill="#000" text-anchor="middle" font-weight="bold" textLength="36" lengthAdjust="spacingAndGlyphs" stroke="#000" stroke-width="0.45"># contr</text>
</g>
<g clip-path="url(#c50)">
<text x="444" y="942" font-size="10" fill="#000" text-anchor="middle" font-weight="bold" textLength="60" lengthAdjust="spacingAndGlyphs" stroke="#000" stroke-width="0.45">Bankroll-PS</text>
</g>
<text x="328.5" y="957.2" font-size="9.3" fill="#000" text-anchor="middle" textLength="14" lengthAdjust="spacingAndGlyphs" >199</text>
<text x="387" y="957.2" font-size="7.6" fill="#000" text-anchor="middle" >2</text>
<text x="444" y="957.2" font-size="10" fill="#000" text-anchor="middle" font-weight="bold" textLength="23" lengthAdjust="spacingAndGlyphs" stroke="#000" stroke-width="0.5">5898</text>
<text x="328.5" y="971.2" font-size="9.3" fill="#ff0000" text-anchor="middle" textLength="14" lengthAdjust="spacingAndGlyphs" >135</text>
<text x="387" y="971.2" font-size="7.6" fill="#000" text-anchor="middle" >2</text>
<text x="444" y="971.2" font-size="10" fill="#000" text-anchor="middle" font-weight="bold" textLength="23" lengthAdjust="spacingAndGlyphs" stroke="#000" stroke-width="0.5">5628</text>
<text x="328.5" y="985.2" font-size="9.3" fill="#000" text-anchor="middle" textLength="14" lengthAdjust="spacingAndGlyphs" >199</text>
<text x="387" y="985.2" font-size="7.6" fill="#000" text-anchor="middle" >2</text>
<text x="444" y="985.2" font-size="10" fill="#000" text-anchor="middle" font-weight="bold" textLength="23" lengthAdjust="spacingAndGlyphs" stroke="#000" stroke-width="0.5">6026</text>
<text x="328.5" y="999.2" font-size="9.3" fill="#000" text-anchor="middle" textLength="14" lengthAdjust="spacingAndGlyphs" >157</text>
<text x="387" y="999.2" font-size="7.6" fill="#000" text-anchor="middle" >3</text>
<text x="444" y="999.2" font-size="10" fill="#000" text-anchor="middle" font-weight="bold" textLength="23" lengthAdjust="spacingAndGlyphs" stroke="#000" stroke-width="0.5">6497</text>
<text x="328.5" y="1013.2" font-size="9.3" fill="#ff0000" text-anchor="middle" textLength="14" lengthAdjust="spacingAndGlyphs" >165</text>
<text x="387" y="1013.2" font-size="7.6" fill="#000" text-anchor="middle" >3</text>
<text x="444" y="1013.2" font-size="10" fill="#000" text-anchor="middle" font-weight="bold" textLength="23" lengthAdjust="spacingAndGlyphs" stroke="#000" stroke-width="0.5">6002</text>
<text x="328.5" y="1027.2" font-size="9.3" fill="#ff0000" text-anchor="middle" textLength="14" lengthAdjust="spacingAndGlyphs" >155</text>
<text x="387" y="1027.2" font-size="7.6" fill="#000" text-anchor="middle" >3</text>
<text x="444" y="1027.2" font-size="10" fill="#000" text-anchor="middle" font-weight="bold" textLength="23" lengthAdjust="spacingAndGlyphs" stroke="#000" stroke-width="0.5">5537</text>
<text x="328.5" y="1041.4" font-size="9.3" fill="#000" text-anchor="middle" textLength="14" lengthAdjust="spacingAndGlyphs" >157</text>
<text x="387" y="1041.4" font-size="7.6" fill="#000" text-anchor="middle" >3</text>
<text x="444" y="1041.4" font-size="10" fill="#000" text-anchor="middle" font-weight="bold" textLength="23" lengthAdjust="spacingAndGlyphs" stroke="#000" stroke-width="0.5">5851</text>
<rect x="548.3" y="883.3" width="229.3" height="31.7" fill="#000" />
<rect x="550.4" y="885.6" width="50.9" height="12.8" fill="#e6b9b8" />
<rect x="550.4" y="900.9" width="50.9" height="11.8" fill="#fff" />
<text x="575.85" y="895.2" font-size="9.6" fill="#000" text-anchor="middle" textLength="21.5" lengthAdjust="spacingAndGlyphs" >Delta</text>
<text x="575.85" y="909.8" font-size="9.4" fill="#000" text-anchor="middle" textLength="19.5" lengthAdjust="spacingAndGlyphs" >2000</text>
<rect x="603.6" y="885.6" width="50.2" height="12.8" fill="#e6b9b8" />
<rect x="603.6" y="900.9" width="50.2" height="11.8" fill="#fff" />
<text x="628.7" y="895.2" font-size="9.6" fill="#000" text-anchor="middle" textLength="35" lengthAdjust="spacingAndGlyphs" >Account</text>
<text x="628.7" y="909.8" font-size="9.4" fill="#000" text-anchor="middle" textLength="19.5" lengthAdjust="spacingAndGlyphs" >5500</text>
<rect x="656" y="885.6" width="59" height="12.8" fill="#f2dcdb" />
<rect x="656" y="900.9" width="59" height="11.8" fill="#f2dcdb" />
<text x="685.5" y="895.2" font-size="9.6" fill="#000" text-anchor="middle" font-weight="bold" textLength="55" lengthAdjust="spacingAndGlyphs" stroke="#000" stroke-width="0.3">commision</text>
<text x="685.5" y="909.8" font-size="9.4" fill="#ff0000" text-anchor="middle" font-weight="bold" textLength="5.5" lengthAdjust="spacingAndGlyphs" >5</text>
<rect x="717.2" y="885.6" width="58.4" height="12.8" fill="#f2dcdb" />
<rect x="717.2" y="900.9" width="58.4" height="11.8" fill="#f2dcdb" />
<text x="746.4" y="895.2" font-size="9.6" fill="#000" text-anchor="middle" font-weight="bold" textLength="36" lengthAdjust="spacingAndGlyphs" stroke="#000" stroke-width="0.3">slipage</text>
<text x="746.4" y="909.8" font-size="9.4" fill="#ff0000" text-anchor="middle" font-weight="bold" textLength="10" lengthAdjust="spacingAndGlyphs" >10</text>
<rect x="548.4" y="913" width="228.6" height="18" fill="#8eb4e3" />
<rect x="548.4" y="916" width="228.6" height="13" fill="#4f81bd" />
<rect x="548.4" y="931" width="228.6" height="120" fill="#8eb4e3" />
<rect x="548.4" y="913" width="228.6" height="1" fill="#000" />
<rect x="548.4" y="915" width="228.6" height="1" fill="#000" />
<rect x="548.4" y="929" width="228.6" height="1" fill="#000" />
<rect x="548.4" y="931" width="228.6" height="1" fill="#000" />
<rect x="548.4" y="945" width="228.6" height="1" fill="#000" />
<rect x="548.4" y="947" width="228.6" height="1" fill="#000" />
<rect x="548.4" y="961" width="228.6" height="1" fill="#000" />
<rect x="548.4" y="975" width="228.6" height="1" fill="#000" />
<rect x="548.4" y="989" width="228.6" height="1" fill="#000" />
<rect x="548.4" y="1003" width="228.6" height="1" fill="#000" />
<rect x="548.4" y="1017" width="228.6" height="1" fill="#000" />
<rect x="548.4" y="1031" width="228.6" height="1" fill="#000" />
<rect x="548.4" y="913" width="2" height="140" fill="#000" />
<rect x="776" y="913" width="1" height="19" fill="#000" />
<rect x="776" y="945" width="1" height="110" fill="#000" />
<rect x="602" y="931" width="1" height="123" fill="#000" />
<rect x="654" y="931" width="1" height="123" fill="#000" />
<rect x="716" y="931" width="1" height="123" fill="#000" />
<g clip-path="url(#c51)">
<text x="662.7" y="926.3" font-size="10.6" fill="#17375d" text-anchor="middle" font-weight="bold" textLength="116" lengthAdjust="spacingAndGlyphs" >Position Sizing - exit 1-2-3</text>
</g>
<g clip-path="url(#c52)">
<text x="575.7" y="942" font-size="10" fill="#000" text-anchor="middle" textLength="41" lengthAdjust="spacingAndGlyphs" >Exit 1-2-3</text>
</g>
<g clip-path="url(#c53)">
<text x="628.5" y="942" font-size="10" fill="#000" text-anchor="middle" textLength="32" lengthAdjust="spacingAndGlyphs" ># contr</text>
</g>
<g clip-path="url(#c54)">
<text x="685.5" y="942" font-size="9.6" fill="#000" text-anchor="middle" textLength="63" lengthAdjust="spacingAndGlyphs" >Bankroll-no PS</text>
</g>
<g clip-path="url(#c55)">
<text x="746.5" y="942" font-size="10" fill="#000" text-anchor="middle" font-weight="bold" textLength="68" lengthAdjust="spacingAndGlyphs" stroke="#000" stroke-width="0.45">Bankroll1-2-3</text>
</g>
<text x="575.7" y="957.2" font-size="8.2" fill="#000" text-anchor="middle" textLength="9" lengthAdjust="spacingAndGlyphs" >95</text>
<text x="628.5" y="957.2" font-size="7.6" fill="#000" text-anchor="middle" >2</text>
<text x="685.5" y="957.2" font-size="8.2" fill="#000" text-anchor="middle" textLength="17.5" lengthAdjust="spacingAndGlyphs" >5595</text>
<text x="746.5" y="957.2" font-size="10" fill="#000" text-anchor="middle" font-weight="bold" textLength="23" lengthAdjust="spacingAndGlyphs" stroke="#000" stroke-width="0.5">5690</text>
<text x="575.7" y="971.2" font-size="8.2" fill="#ff0000" text-anchor="middle" textLength="13" lengthAdjust="spacingAndGlyphs" >165</text>
<text x="628.5" y="971.2" font-size="7.6" fill="#000" text-anchor="middle" >2</text>
<text x="685.5" y="971.2" font-size="8.2" fill="#000" text-anchor="middle" textLength="17.5" lengthAdjust="spacingAndGlyphs" >5430</text>
<text x="746.5" y="971.2" font-size="10" fill="#000" text-anchor="middle" font-weight="bold" textLength="23" lengthAdjust="spacingAndGlyphs" stroke="#000" stroke-width="0.5">5360</text>
<text x="575.7" y="985.2" font-size="8.2" fill="#000" text-anchor="middle" textLength="13" lengthAdjust="spacingAndGlyphs" >145</text>
<text x="628.5" y="985.2" font-size="7.6" fill="#000" text-anchor="middle" >2</text>
<text x="685.5" y="985.2" font-size="8.2" fill="#000" text-anchor="middle" textLength="17.5" lengthAdjust="spacingAndGlyphs" >5575</text>
<text x="746.5" y="985.2" font-size="10" fill="#000" text-anchor="middle" font-weight="bold" textLength="23" lengthAdjust="spacingAndGlyphs" stroke="#000" stroke-width="0.5">5650</text>
<text x="575.7" y="999.2" font-size="8.2" fill="#000" text-anchor="middle" textLength="9" lengthAdjust="spacingAndGlyphs" >95</text>
<text x="628.5" y="999.2" font-size="7.6" fill="#000" text-anchor="middle" >2</text>
<text x="685.5" y="999.2" font-size="8.2" fill="#000" text-anchor="middle" textLength="17.5" lengthAdjust="spacingAndGlyphs" >5670</text>
<text x="746.5" y="999.2" font-size="10" fill="#000" text-anchor="middle" font-weight="bold" textLength="23" lengthAdjust="spacingAndGlyphs" stroke="#000" stroke-width="0.5">5840</text>
<text x="575.7" y="1013.2" font-size="8.2" fill="#ff0000" text-anchor="middle" textLength="13" lengthAdjust="spacingAndGlyphs" >165</text>
<text x="628.5" y="1013.2" font-size="7.6" fill="#000" text-anchor="middle" >2</text>
<text x="685.5" y="1013.2" font-size="8.2" fill="#000" text-anchor="middle" textLength="17.5" lengthAdjust="spacingAndGlyphs" >5505</text>
<text x="746.5" y="1013.2" font-size="10" fill="#000" text-anchor="middle" font-weight="bold" textLength="23" lengthAdjust="spacingAndGlyphs" stroke="#000" stroke-width="0.5">5510</text>
<text x="575.7" y="1027.2" font-size="8.2" fill="#ff0000" text-anchor="middle" textLength="13" lengthAdjust="spacingAndGlyphs" >165</text>
<text x="628.5" y="1027.2" font-size="7.6" fill="#000" text-anchor="middle" >2</text>
<text x="685.5" y="1027.2" font-size="8.2" fill="#000" text-anchor="middle" textLength="17.5" lengthAdjust="spacingAndGlyphs" >5340</text>
<text x="746.5" y="1027.2" font-size="10" fill="#000" text-anchor="middle" font-weight="bold" textLength="23" lengthAdjust="spacingAndGlyphs" stroke="#000" stroke-width="0.5">5180</text>
<text x="575.7" y="1041.4" font-size="8.2" fill="#ff0000" text-anchor="middle" textLength="9" lengthAdjust="spacingAndGlyphs" >35</text>
<text x="628.5" y="1041.4" font-size="7.6" fill="#000" text-anchor="middle" >3</text>
<text x="685.5" y="1041.4" font-size="8.2" fill="#000" text-anchor="middle" textLength="17.5" lengthAdjust="spacingAndGlyphs" >5305</text>
<text x="746.5" y="1041.4" font-size="10" fill="#000" text-anchor="middle" font-weight="bold" textLength="23" lengthAdjust="spacingAndGlyphs" stroke="#000" stroke-width="0.5">5110</text>
<rect x="779.3" y="883.3" width="122.5" height="31.7" fill="#000" />
<rect x="782" y="886.1" width="55.8" height="12.3" fill="#ebf1de" />
<rect x="782" y="900.9" width="55.8" height="11.3" fill="#ebf1de" />
<text x="809.9" y="895.2" font-size="9.6" fill="#000" text-anchor="middle" textLength="49" lengthAdjust="spacingAndGlyphs" >%down-loss</text>
<text x="809.9" y="909.8" font-size="9.4" fill="#000" text-anchor="middle" textLength="12" lengthAdjust="spacingAndGlyphs" >0%</text>
<rect x="841.8" y="886.1" width="57.2" height="12.3" fill="#ebf1de" />
<rect x="841.8" y="900.9" width="57.2" height="11.3" fill="#ebf1de" />
<text x="870.4" y="895.2" font-size="9.6" fill="#000" text-anchor="middle" textLength="45" lengthAdjust="spacingAndGlyphs" >%down-win</text>
<text x="870.4" y="909.8" font-size="9.4" fill="#000" text-anchor="middle" textLength="17" lengthAdjust="spacingAndGlyphs" >15%</text>
<rect x="780" y="913" width="181" height="18" fill="#c3d69b" />
<rect x="780" y="916" width="181" height="13" fill="#c3d69b" />
<rect x="780" y="931" width="181" height="120" fill="#c3d69b" />
<rect x="780" y="913" width="181" height="1" fill="#000" />
<rect x="780" y="915" width="181" height="1" fill="#000" />
<rect x="780" y="929" width="181" height="1" fill="#000" />
<rect x="780" y="931" width="181" height="1" fill="#000" />
<rect x="780" y="945" width="181" height="1" fill="#000" />
<rect x="780" y="947" width="181" height="1" fill="#000" />
<rect x="780" y="961" width="181" height="1" fill="#000" />
<rect x="780" y="975" width="181" height="1" fill="#000" />
<rect x="780" y="989" width="181" height="1" fill="#000" />
<rect x="780" y="1003" width="181" height="1" fill="#000" />
<rect x="780" y="1017" width="181" height="1" fill="#000" />
<rect x="780" y="1031" width="181" height="1" fill="#000" />
<rect x="780" y="913" width="1" height="140" fill="#000" />
<rect x="960" y="913" width="1" height="19" fill="#000" />
<rect x="960" y="945" width="1" height="110" fill="#000" />
<rect x="840" y="931" width="1" height="123" fill="#000" />
<rect x="900" y="931" width="1" height="123" fill="#000" />
<g clip-path="url(#c56)">
<text x="873.7" y="926.3" font-size="10.8" fill="#000" text-anchor="middle" font-weight="bold" textLength="204" lengthAdjust="spacingAndGlyphs" stroke="#000" stroke-width="0.35">REAL TRADING ERRORS-SIMULATION</text>
</g>
<g clip-path="url(#c57)">
<text x="810.5" y="942" font-size="10" fill="#000" text-anchor="middle" font-weight="bold" textLength="46" lengthAdjust="spacingAndGlyphs" stroke="#000" stroke-width="0.45">Exit 1-2-3</text>
</g>
<g clip-path="url(#c58)">
<text x="870.5" y="942" font-size="10" fill="#000" text-anchor="middle" font-weight="bold" textLength="36" lengthAdjust="spacingAndGlyphs" stroke="#000" stroke-width="0.45"># contr</text>
</g>
<g clip-path="url(#c59)">
<text x="930.5" y="942" font-size="10" fill="#000" text-anchor="middle" font-weight="bold" textLength="60" lengthAdjust="spacingAndGlyphs" stroke="#000" stroke-width="0.45">Bankroll-PS</text>
</g>
<text x="810.5" y="957.2" font-size="9.3" fill="#000" text-anchor="middle" textLength="10" lengthAdjust="spacingAndGlyphs" >80</text>
<text x="870.5" y="957.2" font-size="7.6" fill="#000" text-anchor="middle" >2</text>
<text x="930.5" y="957.2" font-size="10" fill="#000" text-anchor="middle" font-weight="bold" textLength="23" lengthAdjust="spacingAndGlyphs" stroke="#000" stroke-width="0.5">5660</text>
<text x="810.5" y="971.2" font-size="9.3" fill="#ff0000" text-anchor="middle" textLength="14" lengthAdjust="spacingAndGlyphs" >165</text>
<text x="870.5" y="971.2" font-size="7.6" fill="#000" text-anchor="middle" >2</text>
<text x="930.5" y="971.2" font-size="10" fill="#000" text-anchor="middle" font-weight="bold" textLength="23" lengthAdjust="spacingAndGlyphs" stroke="#000" stroke-width="0.5">5330</text>
<text x="810.5" y="985.2" font-size="9.3" fill="#000" text-anchor="middle" textLength="14" lengthAdjust="spacingAndGlyphs" >123</text>
<text x="870.5" y="985.2" font-size="7.6" fill="#000" text-anchor="middle" >2</text>
<text x="930.5" y="985.2" font-size="10" fill="#000" text-anchor="middle" font-weight="bold" textLength="23" lengthAdjust="spacingAndGlyphs" stroke="#000" stroke-width="0.5">5576</text>
<text x="810.5" y="999.2" font-size="9.3" fill="#000" text-anchor="middle" textLength="10" lengthAdjust="spacingAndGlyphs" >80</text>
<text x="870.5" y="999.2" font-size="7.6" fill="#000" text-anchor="middle" >2</text>
<text x="930.5" y="999.2" font-size="10" fill="#000" text-anchor="middle" font-weight="bold" textLength="23" lengthAdjust="spacingAndGlyphs" stroke="#000" stroke-width="0.5">5736</text>
<text x="810.5" y="1013.2" font-size="9.3" fill="#ff0000" text-anchor="middle" textLength="14" lengthAdjust="spacingAndGlyphs" >165</text>
<text x="870.5" y="1013.2" font-size="7.6" fill="#000" text-anchor="middle" >2</text>
<text x="930.5" y="1013.2" font-size="10" fill="#000" text-anchor="middle" font-weight="bold" textLength="23" lengthAdjust="spacingAndGlyphs" stroke="#000" stroke-width="0.5">5406</text>
<text x="810.5" y="1027.2" font-size="9.3" fill="#ff0000" text-anchor="middle" textLength="14" lengthAdjust="spacingAndGlyphs" >165</text>
<text x="870.5" y="1027.2" font-size="7.6" fill="#000" text-anchor="middle" >2</text>
<text x="930.5" y="1027.2" font-size="10" fill="#000" text-anchor="middle" font-weight="bold" textLength="23" lengthAdjust="spacingAndGlyphs" stroke="#000" stroke-width="0.5">5076</text>
<text x="810.5" y="1041.4" font-size="9.3" fill="#ff0000" text-anchor="middle" textLength="10" lengthAdjust="spacingAndGlyphs" >35</text>
<text x="870.5" y="1041.4" font-size="7.6" fill="#000" text-anchor="middle" >3</text>
<text x="930.5" y="1041.4" font-size="10" fill="#000" text-anchor="middle" font-weight="bold" textLength="23" lengthAdjust="spacingAndGlyphs" stroke="#000" stroke-width="0.5">5006</text>
</g>
<rect x="8" y="1039" width="1035.5" height="17" fill="url(#g60)" />
<rect x="8" y="1039" width="718" height="1" fill="#8ea8cc" />
<rect x="8" y="1039.5" width="62" height="15.5" fill="url(#g61)" />
<path d="M14.5 1042.8 v7.4 M19.8 1042.8 v7.4 l-4.4 -3.7 z" fill="#1e3f8a" stroke="#1e3f8a" stroke-width="1.1" />
<path d="M34.3 1042.8 v7.4 l-4.3 -3.7 z" fill="#1e3f8a" />
<path d="M44.2 1042.8 v7.4 l4.3 -3.7 z" fill="#1e3f8a" />
<path d="M58.2 1042.8 v7.4 l4.4 -3.7 z M63.5 1042.8 v7.4" fill="#1e3f8a" stroke="#1e3f8a" stroke-width="1.1" />
<path d="M440 1039.5 L659 1039.5 L648 1052 Q647 1054 645 1054 L443 1054 Q441.5 1054 441 1052 Z" fill="url(#g62)" stroke="#7f9dc8" stroke-width="1" />
<path d="M311 1039.5 L452 1039.5 L441 1052 Q440 1054 438 1054 L314 1054 Q312.5 1054 312 1052 Z" fill="url(#g62)" stroke="#7f9dc8" stroke-width="1" />
<path d="M165 1039.5 L323 1039.5 L312 1052 Q311 1054 309 1054 L168 1054 Q166.5 1054 166 1052 Z" fill="url(#g62)" stroke="#7f9dc8" stroke-width="1" />
<path d="M71 1039.5 L177 1039.5 L166 1052 Q165 1054 163 1054 L74 1054 Q72.5 1054 72 1052 Z" fill="url(#g62)" stroke="#7f9dc8" stroke-width="1" />
<text x="84" y="1051.5" font-size="12.5" fill="#1f3f8f" textLength="70" lengthAdjust="spacingAndGlyphs" >TSWorkbook</text>
<text x="180" y="1051.5" font-size="12.5" fill="#1f3f8f" textLength="119" lengthAdjust="spacingAndGlyphs" >MFE-MAE Frequencies</text>
<text x="328.3" y="1051.5" font-size="12.5" fill="#1f3f8f" textLength="99.3" lengthAdjust="spacingAndGlyphs" >MAE-MFE Analysys</text>
<text x="460" y="1051.5" font-size="12.5" fill="#1f3f8f" textLength="170" lengthAdjust="spacingAndGlyphs" >ExitPT-Equities &amp; Paterns chart</text>
<path d="M648 1038.5 L725 1038.5 L725 1054.5 L647 1054.5 Q644.5 1054.5 645 1052.5 Z" fill="#fff" stroke="#7f9dc8" stroke-width="1" />
<rect x="648.5" y="1038" width="76" height="1.5" fill="#fff" />
<text x="657" y="1051.8" font-size="13.2" fill="#1f3f8f" font-weight="bold" textLength="67.5" lengthAdjust="spacingAndGlyphs" clip-path="url(#clipAT)">Fixed ratio</text>
<rect x="723" y="1040.5" width="6" height="13.5" fill="#ffffff" stroke="#9db5d8" stroke-width="1" />
<rect x="725.3" y="1043" width="1.3" height="8.5" fill="#7f9dc8" />
<rect x="729.5" y="1038.5" width="313.5" height="17.5" fill="url(#g63)" />
<path d="M741.5 1042.5 v9 l-5 -4.5 z" fill="#3f4f7a" />
<path d="M1008 1042.5 v9 l5 -4.5 z" fill="#3f4f7a" />
<rect x="748" y="1040.5" width="228" height="14" fill="url(#g64)" stroke="#50628f" stroke-width="1" rx="1.5" />
<rect x="858" y="1043.5" width="1" height="8" fill="#6f6f78" />
<rect x="860" y="1043.5" width="1" height="8" fill="#6f6f78" />
<rect x="862" y="1043.5" width="1" height="8" fill="#6f6f78" />
<rect x="864" y="1043.5" width="1" height="8" fill="#6f6f78" />
<rect x="1020.5" y="1040.5" width="5.5" height="14" fill="#fff" stroke="#a9c0e0" stroke-width="1" />
<rect x="1022.5" y="1043" width="1.5" height="9" fill="#6f8fc0" />
<rect x="1027.5" y="1039" width="15.5" height="17" fill="#7b9dd3" />
<rect x="8" y="1056" width="1035.5" height="21.5" fill="url(#g65)" />
<rect x="8" y="1056" width="1035.5" height="1" fill="#8aa7cf" />
<text x="15.7" y="1070" font-size="12" fill="#15428b" textLength="30.5" lengthAdjust="spacingAndGlyphs" >Ready</text>
<rect x="55" y="1058" width="1" height="18" fill="#94b4dc" />
<rect x="56" y="1058" width="1" height="18" fill="#e8f1fc" />
<rect x="788.5" y="1056" width="254.5" height="21.5" fill="url(#g66)" />
<rect x="788.5" y="1056" width="254.5" height="1" fill="#8aa7cf" />
<rect x="787.5" y="1057" width="1" height="20" fill="#7f9fcb" />
<rect x="788.5" y="1057" width="1" height="20" fill="#dfeafa" />
<rect x="794.7" y="1057.5" width="55.7" height="18" fill="url(#g67)" stroke="#7f94b5" stroke-width="1" rx="2" />
<rect x="794.7" y="1057.5" width="19" height="18" fill="url(#g68)" stroke="#c69a4a" stroke-width="1" rx="2" />
<rect x="813.7" y="1058" width="1" height="17" fill="#9aaac3" />
<rect x="832.2" y="1058" width="1" height="17" fill="#9aaac3" />
<rect x="798.3" y="1061.5" width="12" height="10.5" fill="#f4f4f6" stroke="#4f5665" stroke-width="1.2" />
<path d="M798.3 1065 h12 M798.3 1068.5 h12 M802.3 1061.5 v10.5 M806.3 1061.5 v10.5" fill="none" stroke="#4f5665" stroke-width="1" />
<rect x="817.3" y="1061.5" width="12" height="10.5" fill="#f4f4f6" stroke="#4f5665" stroke-width="1.2" />
<rect x="820" y="1064" width="6.5" height="6" fill="#fff" stroke="#4f5665" stroke-width="1" />
<rect x="835.8" y="1061.5" width="12" height="10.5" fill="#f4f4f6" stroke="#4f5665" stroke-width="1.2" />
<path d="M841.8 1061.5 v6.5 M835.8 1068 h12" fill="none" stroke="#4f5665" stroke-width="1.2" />
<rect x="836.5" y="1062.2" width="5" height="5.5" fill="#c9ced8" />
<text x="859" y="1070.5" font-size="12" fill="#15316b" textLength="20.6" lengthAdjust="spacingAndGlyphs" >70%</text>
<circle cx="897.6" cy="1066.5" r="7" fill="url(#g69)" stroke="#4c6fa6" stroke-width="1.2" />
<rect x="893.6" y="1065.5" width="8" height="2" fill="#3f4f6f" />
<circle cx="1014.5" cy="1066.5" r="7" fill="url(#g70)" stroke="#4c6fa6" stroke-width="1.2" />
<rect x="1010.5" y="1065.5" width="8" height="2" fill="#3f4f6f" />
<rect x="1013.5" y="1062.5" width="2" height="8" fill="#3f4f6f" />
<rect x="906" y="1066" width="100" height="1" fill="#5f7fb5" />
<rect x="906" y="1067" width="100" height="1" fill="#e3ecf9" />
<rect x="956.5" y="1062.5" width="1" height="8" fill="#6f8fc0" />
<rect x="957.5" y="1062.5" width="1" height="8" fill="#eef4fc" />
<path d="M936.5 1060.5 h8 v7 l-4 4.5 l-4 -4.5 z" fill="url(#g71)" stroke="#4c6585" stroke-width="1" />
<rect x="1040.8" y="1063.8" width="2" height="2" fill="#dbe7f8" />
<rect x="1040" y="1063" width="2" height="2" fill="#45618f" />
<rect x="1036.8" y="1067.8" width="2" height="2" fill="#dbe7f8" />
<rect x="1036" y="1067" width="2" height="2" fill="#45618f" />
<rect x="1040.8" y="1067.8" width="2" height="2" fill="#dbe7f8" />
<rect x="1040" y="1067" width="2" height="2" fill="#45618f" />
<rect x="1032.8" y="1071.8" width="2" height="2" fill="#dbe7f8" />
<rect x="1032" y="1071" width="2" height="2" fill="#45618f" />
<rect x="1036.8" y="1071.8" width="2" height="2" fill="#dbe7f8" />
<rect x="1036" y="1071" width="2" height="2" fill="#45618f" />
<rect x="1040.8" y="1071.8" width="2" height="2" fill="#dbe7f8" />
<rect x="1040" y="1071" width="2" height="2" fill="#45618f" />
<rect x="1043" y="28" width="1" height="1050" fill="#4b5a6a" />
<rect x="1044" y="29" width="1" height="1049.8" fill="#dfe7ee" />
<rect x="7" y="1077" width="1037" height="1" fill="#4b5a6a" />
<rect x="7.5" y="1078" width="1037.5" height="0.9" fill="#dfe7ee" />
<rect x="7" y="29" width="1" height="1049" fill="#4b5a6a" /></svg></body></html>
